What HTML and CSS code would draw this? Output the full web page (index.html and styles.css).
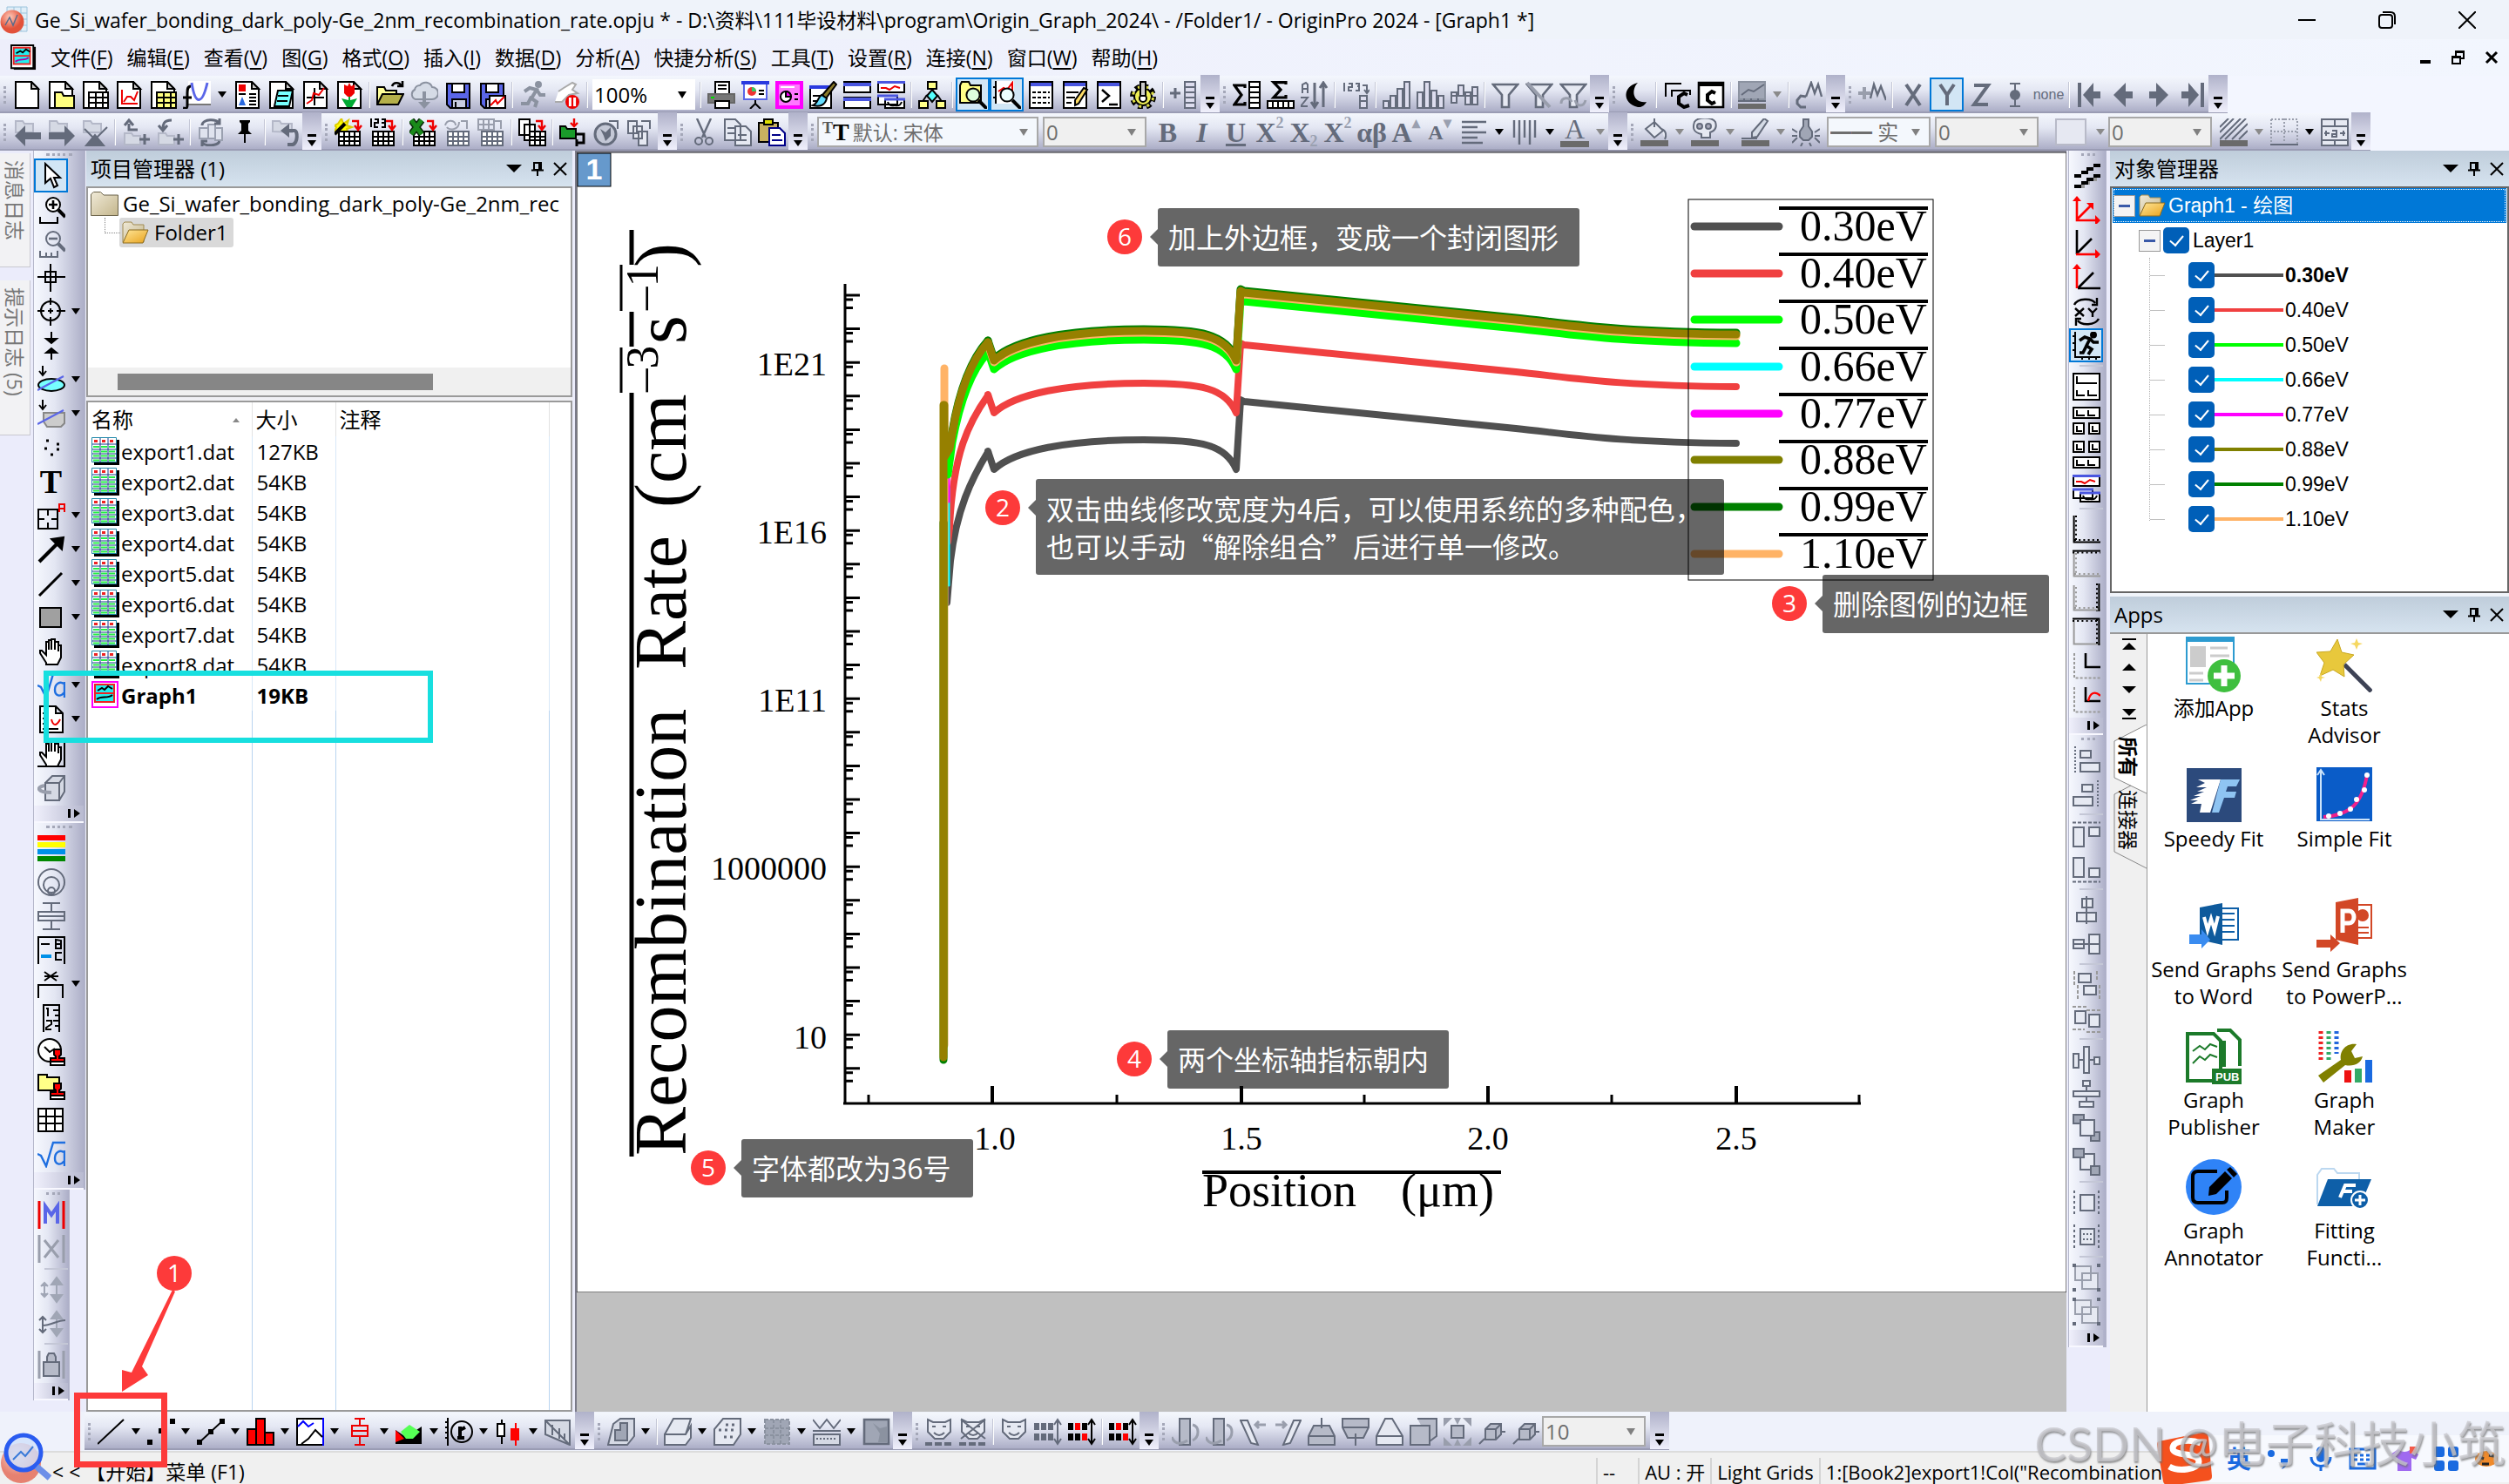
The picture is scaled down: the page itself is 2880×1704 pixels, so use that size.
FILE: index.html
```html
<!DOCTYPE html>
<html lang="zh-CN">
<head>
<meta charset="utf-8">
<title>OriginPro 2024 - [Graph1 *]</title>
<link rel="stylesheet" href="styles.css">
</head>
<body>
<svg class="sprite" aria-hidden="true">
<defs>
<linearGradient id="gold" x1="0" y1="0" x2="1" y2="1"><stop offset="0" stop-color="#ffe79a"/><stop offset="1" stop-color="#e8a21c"/></linearGradient>
<linearGradient id="tan" x1="0" y1="0" x2="1" y2="1"><stop offset="0" stop-color="#f0ead8"/><stop offset="1" stop-color="#c4b68c"/></linearGradient>
<radialGradient id="ball" cx=".4" cy=".3"><stop offset="0" stop-color="#ffc9b8"/><stop offset="1" stop-color="#e2523a"/></radialGradient>
</defs>
<symbol id="doc" viewBox="0 0 16 16"><path fill="#fff" d="M1.5.5h9l4 4v11h-13z"/><path fill="#ccc" d="M10.5.5v4h4z"/></symbol>
<symbol id="docfold" viewBox="0 0 16 16"><use href="#doc"/><path fill="#ffff80" d="M4.500 15.500v-9h4l1 2h6v7z"/></symbol>
<symbol id="doctable" viewBox="0 0 16 16"><use href="#doc"/><path fill="#fff" d="M4.500 6.500h11v9h-11zM4.500 9.500h11M4.500 12.500h11M8.500 6.500v9M12.500 6.500v9"/></symbol>
<symbol id="docyel" viewBox="0 0 16 16"><use href="#doc"/><path fill="#ffff80" d="M4.500 6.500h11v9h-11zM4.500 9.500h11M4.500 12.500h11M8.500 6.500v9M12.500 6.500v9"/></symbol>
<symbol id="docgraph" viewBox="0 0 16 16"><use href="#doc"/><path stroke="#e00" d="M4 5v8h9M5 12l2-3h2l2 2 2-5"/></symbol>
<symbol id="func" viewBox="0 0 16 16"><path fill="#fff" stroke="none" d="M3 0h13v13H3z"/><path stroke="#5a66e8" stroke-width="1.500" d="M5 1c2 13 6 13 9 0"/><path stroke="#777" d="M3 13.500h13"/><path stroke-width="1.500" d="M4.500 3c-2 0-2 2-2 4v7c0 2-1 2-2.500 1.500M0 9.500h5"/></symbol>
<symbol id="docnote" viewBox="0 0 16 16"><use href="#doc"/><path fill="#e00" stroke="none" d="M3 2h4v4H3z"/><path d="M3 7.500h4M9 7.500h4M9 9.500h4M9 11.500h4M9 13.500h4"/><path fill="#2a6ae0" stroke="none" d="M3 14l2-5 2 5z"/></symbol>
<symbol id="docdata" viewBox="0 0 16 16"><use href="#doc"/><path fill="#7ff" d="M4 14.500l2-9h8.500l-2 9zM6 8.500h6M5.500 11.500h6"/></symbol>
<symbol id="docaxis" viewBox="0 0 16 16"><use href="#doc"/><path d="M7.500 4v10M3 9.500h10"/><path stroke="#e00" d="M3 13l3-2 1-4 3 1 3-4"/></symbol>
<symbol id="doctulip" viewBox="0 0 16 16"><use href="#doc"/><path fill="#e00" stroke="none" d="M5 2l2 1 1-2 1 2 2-1v5l-2 2H7L5 7z"/><path fill="#0a3" stroke="none" d="M7.500 9h1v2l4-1-3 5h-3l-3-5 4 1z"/></symbol>
<symbol id="open" viewBox="0 0 16 16"><path fill="#ffff9a" d="M.5 13.500v-10h4l1 2h6v3"/><path fill="#b5b04a" d="M.5 13.500l3-6h12l-3 6z"/><path stroke-width="1.300" d="M9 3c1-3 5-2 5 0M12 3h3V0"/></symbol>
<symbol id="cloud" viewBox="0 0 16 16"><path fill="#d5dbe6" stroke="#8b92a0" d="M3 10.500a3 3 0 01-.5-5.500 3 3 0 013-2.500 4 4 0 017 1 3.500 3.500 0 010 7z"/><path stroke="#8b92a0" stroke-width="2" d="M8 6v8"/><path fill="#8b92a0" stroke="none" d="M4.500 12h7L8 16z"/></symbol>
<symbol id="save" viewBox="0 0 16 16"><path fill="#5a66e8" d="M1.500 1.500h13v14h-11l-2-2z"/><path fill="#fff" d="M4.500 1.500h7v5h-7z"/><path fill="#c8cce0" d="M4.500 10.500h8v5h-8zM6.500 12v3"/></symbol>
<symbol id="savegraph" viewBox="0 0 16 16"><use href="#save"/><path fill="#fff" d="M6.500 8.500h9v7h-9z"/><path stroke="#e00" d="M7 14l3-3 1 2 4-4"/></symbol>
<symbol id="run" viewBox="0 0 16 16"><g stroke="#8b92a0"><circle cx="11" cy="2" r="1.500" fill="#8b92a0"/><path stroke-width="2" d="M3 6l3-2 4 1-3 5 3 2-1 3M7 9l-2 4H1M10 5l2 3h3"/></g></symbol>
<symbol id="stop" viewBox="0 0 16 16"><path fill="#fff" stroke="#aaa" d="M3 6l3-2 5-3 2 1-2 3 3 2-5 1-4 4H1"/><circle cx="11" cy="12" r="4" fill="#e00" stroke="none"/><path stroke="#fff" stroke-width="1.500" d="M9.700 9.500v5M12.300 9.500v5"/></symbol>
<symbol id="print" viewBox="0 0 16 16"><path fill="#fff" d="M4.500.5h8v7h-8zM6 2.500h5M6 4.500h5"/><path fill="#777" stroke="#666" d="M.5 7.500h15v5H.5z"/><path fill="#fff" d="M4.500 11.500h8v4h-8z"/><path stroke="#0d0" d="M2 9.500h2"/></symbol>
<symbol id="slide" viewBox="0 0 16 16"><path fill="#fff" stroke="#5a66e8" d="M1.500 1.500h13v9h-13z"/><path stroke="#2a3adf" stroke-width="2" d="M0 1h16"/><path d="M8 11v2M5 16l3-3 3 3"/><circle cx="6" cy="6" r="2.500" fill="#e33" stroke="none"/><path fill="#3c6" stroke="none" d="M6 6V3.500A2.500 2.500 0 018.500 6z"/><path d="M10 5.500h3M10 7.500h3"/></symbol>
<symbol id="magenta" viewBox="0 0 16 16"><path fill="#f7f" stroke="#f0f" stroke-width="2" d="M1 1h14v14H1z"/><path fill="#fff" stroke="none" d="M3 3h8v1H3z"/><circle cx="6" cy="9" r="3" stroke="#000" fill="#fff"/><path fill="#f0f" d="M6 9V6a3 3 0 013 3zM11 7.500h2M11 10.500h2"/></symbol>
<symbol id="brush" viewBox="0 0 16 16"><path fill="#fff" d="M.5 3.500h12v12H.5z"/><path stroke="#2a3adf" stroke-width="2" d="M0 3.500h12"/><path d="M2 8.500h8M2 11.500h5"/><path fill="#8a7a2a" d="M14 .5l1.500 1.500-6 8-2-2z"/><path fill="#6df" d="M7 8l3 2c-1 4-4 5-8 4 3-1 3-5 5-6z"/></symbol>
<symbol id="win" viewBox="0 0 16 16"><path fill="#fff" d="M.5.5h15v6H.5zM.5 9.500h15v6H.5z"/><path stroke="#4a56e0" stroke-width="2" d="M0 2h16M0 10.500h16"/></symbol>
<symbol id="wins" viewBox="0 0 16 16"><path fill="#fff" d="M.5.5h15v6H.5zM.5 8.500h11v5H.5zM4.500 10.500h11v5h-11z"/><path stroke="#4a56e0" stroke-width="1.500" d="M0 .7h16M0 8.500h12M4 10.500h12"/><path stroke="#e00" d="M2 4h3l2 1 3-2 3 1"/><path d="M6 12c1 3 3 2 4 2s3 1 4-2"/></symbol>
<symbol id="tree" viewBox="0 0 16 16"><path d="M8 4v8M3 13v-2l2-3M13 13v-2l-2-3"/><path fill="#ff8" d="M5.500.5h5v4h-5zM.5 11.500h5v4h-5zM10.500 11.500h5v4h-5z"/><path fill="#5ff" d="M8 5l3 3.500L8 12 5 8.500z"/></symbol>
<symbol id="magfold" viewBox="0 0 16 16"><path fill="#ff8" d="M.5 12.500V2.500l1-2h4l1 2h6v10z"/><path stroke-width="2" d="M11 11l5 5"/><circle cx="8" cy="8" r="3.800" fill="#dfd"/></symbol>
<symbol id="maggraph" viewBox="0 0 16 16"><path fill="#fff" stroke="none" d="M2 0h10v13H2z"/><path stroke="#e00" d="M3 6l3-2 2 1 3-4v6"/><path d="M1.500 0v13M0 3.500h2M0 9.500h2"/><path stroke-width="2" d="M11 11l5 5"/><circle cx="8" cy="8" r="3.800" fill="#eff"/></symbol>
<symbol id="calc" viewBox="0 0 16 16"><path fill="#fff" d="M1.500.5h13v15h-13z"/><path stroke="#4a56e0" stroke-width="2" d="M2 2h12"/><path stroke-dasharray="2 1" d="M3 6.500h10M3 9.500h10M3 12.500h10"/></symbol>
<symbol id="notes" viewBox="0 0 16 16"><path fill="#fff" d="M1.500.5h13v15h-13z"/><path stroke="#4a56e0" stroke-width="2" d="M2 2h12"/><path d="M3 6.500h7M3 9.500h5M3 12.500h3"/><path fill="#fd6" d="M13 4l2 1-5 8-2 1 0-3z"/></symbol>
<symbol id="cmd" viewBox="0 0 16 16"><path fill="#fff" d="M1.500.5h13v15h-13z"/><path stroke="#4a56e0" stroke-width="2" d="M2 2h12"/><path stroke-width="1.300" d="M4 5l4 3.500L4 12M8 13.500h5"/></symbol>
<symbol id="gear" viewBox="0 0 16 16"><circle cx="8" cy="9" r="6" stroke="#000" stroke-width="3" stroke-dasharray="2.700 2"/><circle cx="8" cy="9" r="5" fill="#ee5" /><circle cx="8" cy="9" r="5.800" stroke="#dd4" stroke-width="1.500" stroke-dasharray="1.500 3.200" stroke-dashoffset="-.6"/><circle cx="8" cy="10" r="2" fill="#fff"/><path fill="#ccc" d="M6.500.5h3v8h-3z"/></symbol>
<symbol id="addcol" viewBox="0 0 16 16"><path stroke-width="1.500" d="M0 7h6M3 4v6"/><path fill="#dde" d="M8.500.5h6v15h-6zM8.500 3.500h6M8.500 6.500h6M8.500 9.500h6M8.500 12.500h6"/></symbol>
<symbol id="sumcol" viewBox="0 0 16 16"><path stroke-width="1.600" d="M7 4V2.500H1L5 8l-4 5.500h6V12"/><path fill="#fff" d="M9.500.5h6v15h-6zM9.500 3.500h6M9.500 6.500h6M9.500 9.500h6M9.500 12.500h6"/></symbol>
<symbol id="sumrow" viewBox="0 0 16 16"><path stroke-width="1.600" d="M11 2V.8H4L8 5l-4 4.500h7V8"/><path fill="#fff" d="M.5 11.500h15v4H.5zM3.500 11v5M6.500 11v5M9.500 11v5M12.500 11v5"/></symbol>
<symbol id="sort" viewBox="0 0 16 16"><path d="M1 7V2l2-1 1 1v5M1 4.500h3M0 9.500h4l-4 5h4"/><path stroke-width="1.500" d="M8 1v14M13 1v14M6 12l2 3 2-3M11 4l2-3 2 3"/></symbol>
<symbol id="n123" viewBox="0 0 16 16"><path d="M1.500 1v5M4 1.500h2v2H4v2h2M8 1.500h2V3H9M10 3v2.500H8M12 2.500h2.500V6M13 5l1.500 2L16 5"/><path fill="#dde" d="M10.500 8.500h4v7h-4zM10.500 11.500h4"/></symbol>
<symbol id="bars" viewBox="0 0 16 16"><path fill="#dde" d="M.5 11.500h3v4h-3zM4.500 8.500h3v7h-3zM8.500 4.500h3v11h-3zM12.500.5h3v15h-3z"/></symbol>
<symbol id="bars2" viewBox="0 0 16 16"><path fill="#dde" d="M.5 6.500h3v9h-3zM4.500.5h3v15h-3zM8.500 5.500h3v10h-3zM12.500 8.500h3v7h-3z"/></symbol>
<symbol id="bars3" viewBox="0 0 16 16"><path fill="#dde" d="M.5 6.500h3v6h-3zM4.500 2.500h3v6h-3zM8.500 6.500h3v7h-3zM12.500 3.500h3v10h-3zM0 8.500h16"/></symbol>
<symbol id="filter" viewBox="0 0 16 16"><path fill="#e6e9f2" stroke-width="1.300" d="M1 2h14l-5 6v7H6V8z"/></symbol>
<symbol id="filterx" viewBox="0 0 16 16"><use href="#filter"/><path stroke="#999eac" stroke-width="2" d="M1 1l13 14"/></symbol>
<symbol id="filterr" viewBox="0 0 16 16"><use href="#filter"/><path stroke="#999eac" stroke-width="1.500" d="M1 13c0-4 5-4 6-1M9 11c1 4 5 4 6 0"/></symbol>
<symbol id="moon" viewBox="0 0 16 16"><path fill="#000" stroke="none" d="M9 1C0 3 0 13 9 15c2 .3 4-1 5-3C6 13 5 5 9 1z"/></symbol>
<symbol id="cc" viewBox="0 0 16 16"><path d="M1.500 9V1.500h9M5 9V5.500h10.500V8"/><path stroke-width="2" d="M14 8l-2-1-3 2v4l3 2 3-1"/></symbol>
<symbol id="cwin" viewBox="0 0 16 16"><path fill="#fff" stroke-width="1.300" d="M1 1h14v14H1z"/><path stroke-width="2" d="M1 2h14M10.500 7L8.500 6 6 8v3l2.500 2 2-1"/></symbol>
<symbol id="theme" viewBox="0 0 16 16"><path fill="#a0a6b5" stroke="#8b92a0" d="M.5.5h15v10H.5z"/><path d="M2 8l4-3 3 1 6-4M0 11.500h16M3.500 10v2M7.500 10v2M11.500 10v2"/><path fill="#6a6a6a" stroke="none" d="M0 13h16v3H0z"/></symbol>
<symbol id="cm" viewBox="0 0 16 16"><path stroke-width="1.500" d="M6 9L3 8.500 1 11v2l2 2h3"/><path stroke-width="1.200" d="M6 9l3-8 2 6 2-5 2 7"/></symbol>
<symbol id="plusm" viewBox="0 0 16 16"><path stroke="#999eac" stroke-width="2" d="M0 7h7M3.500 3.500v7"/><path stroke-width="1.200" d="M7 10l2-8 2 6 2-5 3 8"/></symbol>
<symbol id="X" viewBox="0 0 16 16"><path stroke-width="2" d="M4 2l8 12M12 2L4 14"/></symbol>
<symbol id="Y" viewBox="0 0 16 16"><path stroke-width="2" d="M4 2l4 6v6M12 2L8 8"/></symbol>
<symbol id="Z" viewBox="0 0 16 16"><path stroke-width="2" d="M4 2.500h8l-8 11h8"/></symbol>
<symbol id="ibar" viewBox="0 0 16 16"><circle cx="8" cy="8" r="2.500" fill="currentColor"/><path d="M5 1.500h6M8 1v14M5 14.500h6"/></symbol>
<symbol id="first" viewBox="0 0 16 16"><path fill="currentColor" stroke="none" d="M1 1h2v14H1zM4 8l6-7v5h4v4h-4v5z"/></symbol>
<symbol id="prev" viewBox="0 0 16 16"><path fill="currentColor" stroke="none" d="M2 8l7-7v5h4v4H9v5z"/></symbol>
<symbol id="next" viewBox="0 0 16 16"><path fill="currentColor" stroke="none" d="M14 8L7 1v5H3v4h4v5z"/></symbol>
<symbol id="last" viewBox="0 0 16 16"><path fill="currentColor" stroke="none" d="M15 1h-2v14h2zM12 8L6 1v5H2v4h4v5z"/></symbol>
<symbol id="fback" viewBox="0 0 16 16"><path fill="#d5d9e4" stroke="#b4b8c8" d="M1.500 8V1.500h4l1 1.500h5v5z"/><path fill="currentColor" stroke="none" d="M1 10l6-6v4h9v4H7v4z"/></symbol>
<symbol id="ffwd" viewBox="0 0 16 16"><path fill="#d5d9e4" stroke="#b4b8c8" d="M1.500 8V1.500h4l1 1.500h5v5z"/><path fill="currentColor" stroke="none" d="M16 10l-6-6v4H1v4h9v4z"/></symbol>
<symbol id="fup" viewBox="0 0 16 16"><path fill="#d5d9e4" stroke="#b4b8c8" d="M1.500 8V1.500h4l1 1.500h5v5z"/><path fill="currentColor" d="M3 15.500l5-6 5 6zM2 6l5 5M9 11l6-6"/></symbol>
<symbol id="fnew" viewBox="0 0 16 16"><path fill="#d5d9e4" stroke="#b4b8c8" d="M1.500 15V8.500h4l1 1.500h4v5z"/><path stroke-width="1.500" d="M4 3v3.500h5M1.500 4L4 1l2.500 3M10 12h6M13 9v6"/></symbol>
<symbol id="fnew2" viewBox="0 0 16 16"><path fill="#d5d9e4" stroke="#b4b8c8" d="M1.500 15V8.500h4l1 1.500h4v5z"/><path stroke-width="1.500" d="M9 1C4 1 4 4 4 6M1.500 4L4 7l2.500-3M10 12h6M13 9v6"/></symbol>
<symbol id="refresh" viewBox="0 0 16 16"><path fill="#dfe3ee" stroke="#9aa0b0" d="M1.500 5.500h5v6h-5zM6.500 3.500h4v8h-4zM10.500 5.500h4v7h-4z"/><path stroke-width="1.500" d="M3 4c0-4 9-4 10-1M13 0v3h-3M13 13c-1 3-8 3-10 1M3 16v-3h3"/></symbol>
<symbol id="pin" viewBox="0 0 16 16"><path fill="#000" stroke="none" d="M5 1h6v1l-1 1v4l2 2H8.500v5h-1V9H4l2-2V3L5 2z"/></symbol>
<symbol id="undo" viewBox="0 0 16 16"><path fill="#d5d9e4" stroke="#b4b8c8" d="M.5 7.500V1.500h4l1 1.500h6v5z"/><path stroke-width="2" d="M8 7h5c2 0 2 7-1 8H9"/><path fill="currentColor" stroke="none" d="M5 7l5-4v8z"/></symbol>
<symbol id="impwiz" viewBox="0 0 16 16"><path fill="#ff0" stroke="#dc0" d="M4 0l1 3 3-2-1 3 3 1-3 1 1 3-3-1-2 3-1-3-2 0 1-3-1-1 2-1z"/><path stroke-width="2" d="M0 9l6-6"/><use href="#grid"/><use href="#redarr"/></symbol>
<symbol id="grid" viewBox="0 0 16 16"><path fill="#fff" d="M2.500 7.500h12v8h-12zM2.500 10.500h12M2.500 13h12M5.500 8v8M8.500 8v8M11.500 8v8"/></symbol>
<symbol id="redarr" viewBox="0 0 16 16"><path stroke="#e00" stroke-width="1.200" d="M10 1.500h3.500V6M11.500 4l2 2.500 2-2.500"/></symbol>
<symbol id="imp123" viewBox="0 0 16 16"><path d="M1.500 0v5M3.500.5h2v2h-2v2.500h2M7.500.5h2v4.500h-2M7.500 2.500h2"/><use href="#grid"/><use href="#redarr"/></symbol>
<symbol id="impxl" viewBox="0 0 16 16"><use href="#grid"/><path stroke="#0a2a0a" stroke-width="4" d="M1 1l6 8M7 1L1 9"/><path stroke="#1a8a1a" stroke-width="2.500" d="M1 1l6 8M7 1L1 9"/><use href="#redarr"/></symbol>
<symbol id="reimp" viewBox="0 0 16 16"><path stroke="#999eac" d="M1 4c1-4 6-3 6 0M9 2c0 5-6 5-7 3M10 1.500h3.500V6"/><use href="#grid"/></symbol>
<symbol id="reimp2" viewBox="0 0 16 16"><path stroke="#999eac" d="M.5.5h9v6h-9zM.5 3.500h9M3.500.5v6M6.500.5v6M10 1.500h3.500V6"/><use href="#grid"/></symbol>
<symbol id="books" viewBox="0 0 16 16"><path fill="#fff" d="M.5.500h6v9h-6zM3.500 3.500h6v9h-6zM6.500 7.500h9v8h-9zM6.500 10.500h9M6.500 12.500h9M9.500 8v7M12.500 8v7"/><use href="#redarr"/></symbol>
<symbol id="greenf" viewBox="0 0 16 16"><path fill="#1a9a2a" d="M.5 11.500v-7h3l1 1.500h5v5.500z"/><path stroke="#e00" stroke-width="1.200" d="M8.500 0v4M6.500 2.500l2 2 2-2"/><path stroke-width="1.500" d="M9 9h5v5h-4M10 12v4"/></symbol>
<symbol id="globe" viewBox="0 0 16 16"><circle cx="7" cy="9" r="6" fill="#c4c8d6" stroke-width="1.500"/><path fill="currentColor" stroke="none" d="M4 6l3 2 3-3v5l-3 3-1-3z"/><path d="M9 1.500h5V6"/></symbol>
<symbol id="papers" viewBox="0 0 16 16"><path fill="#e6e9f2" d="M.5 1.500h5v7h-5zM3.500 4.500h5v7h-5zM6.500 7.500h5v8h-5z"/><path d="M8 1.500h5V6"/></symbol>
<symbol id="cut" viewBox="0 0 16 16"><path stroke-width="1.200" d="M4 0l5 11M12 0L7 11"/><circle cx="5" cy="13" r="2"/><circle cx="11" cy="13" r="2"/></symbol>
<symbol id="copy" viewBox="0 0 16 16"><path fill="#e6e9f2" d="M.5.500h6l3 3v9h-9zM6.500 4.500h6l3 3v8h-9z"/><path d="M2 5.500h4M2 8.500h4M8 9.500h5M8 12.500h5"/></symbol>
<symbol id="paste" viewBox="0 0 16 16"><path fill="#c8b060" d="M.5 2.500h11v11H.5z"/><path fill="#dd0" d="M3.500.5h5v3h-5z"/><path fill="#fff" stroke="#008" d="M6.500 5.500h6l3 3v7h-9z"/><path stroke="#008" d="M8 9.500h5M8 12.500h6"/></symbol>
<symbol id="align" viewBox="0 0 16 16"><path stroke-width="1.200" d="M1 2h14M1 5h9M1 8h14M1 11h9M1 14h12"/></symbol>
<symbol id="vlines" viewBox="0 0 16 16"><path stroke-width="1.200" d="M2 1v10M5 1v14M8 1v10M11 1v14M14 1v10"/></symbol>
<symbol id="under" viewBox="0 0 16 16"><path fill="#6a6a6a" stroke="none" d="M0 12.500h16v3.500H0z"/></symbol>
<symbol id="bucket" viewBox="0 0 16 16"><use href="#under"/><path fill="#e6e9f2" d="M3 6l5-4 5 5-5 4zM8 5V0M12 6c3 1 3 4 2 6"/></symbol>
<symbol id="skull" viewBox="0 0 16 16"><use href="#under"/><path fill="#e6e9f2" d="M2 2c2-3 10-3 12 0 1 3 0 5-3 6v3H6V9C1 8 1 5 2 2z"/><circle cx="5" cy="4.500" r="1.500" fill="#aab"/><circle cx="10" cy="4.500" r="1.500" fill="#aab"/></symbol>
<symbol id="pencil" viewBox="0 0 16 16"><use href="#under"/><path fill="#d5dbe6" d="M13 0l2 1.500-6 9-3 .5v-3zM0 11.500h9"/></symbol>
<symbol id="bulb" viewBox="0 0 16 16"><path fill="#a0a6b5" d="M6.500.500h3v4l2 3v3l-2 2h-3l-2-2v-3l2-3z"/><path d="M0 6l3 2M16 6l-3 2M0 14l3-3M16 14l-3-3M5 16l1-2M11 16l-1-2M0 10h3M13 10h3"/></symbol>
<symbol id="hatch" viewBox="0 0 16 16"><use href="#under"/><path d="M0 5l5-5M0 8l8-8M0 12L12 0M3 12L15 0M7 12l9-9M11 12l5-5"/></symbol>
<symbol id="borders" viewBox="0 0 16 16"><path stroke="#999eac" stroke-dasharray="1 1" d="M.5.500h15v14M.5.500v14M8 0v14M0 7.500h16"/><path d="M0 15h16"/></symbol>
<symbol id="merge" viewBox="0 0 16 16"><path fill="#e6e9f2" d="M.5.500h15v15H.5zM.5 4.500h15M.5 12.500h15M8 0v4M8 12v4M6.500 7h2.500v3.500H6.500V9H9M2 8.500h3M11 8.500h3M3 7v3M13 7v3"/></symbol>
<symbol id="ptr" viewBox="0 0 16 16"><path fill="#fff" d="M4.500 1v11l3-2.500 2 5 2-1-2-4.500h3.500z"/></symbol>
<symbol id="zin" viewBox="0 0 16 16"><circle cx="9" cy="5" r="4" fill="#fff"/><path stroke-width="1.300" d="M6.500 5h5M9 2.500v5"/><path stroke-width="2" d="M12 8l4 4"/><path d="M1.500 12v3.500h10V12"/></symbol>
<symbol id="zout" viewBox="0 0 16 16"><circle cx="9" cy="5" r="4"/><path stroke-width="1.300" d="M6.500 5h5"/><path stroke-width="2" d="M12 8l4 4"/><path d="M1.500 12v3.500h10V12M5 13v2M8 13v2"/></symbol>
<symbol id="cross" viewBox="0 0 16 16"><path d="M0 7.500h16M7.500 0v16M4.500 4.500h6v6h-6z"/></symbol>
<symbol id="target" viewBox="0 0 16 16"><circle cx="7.500" cy="7.500" r="5.500"/><path d="M0 7.500h4M11 7.500h5M7.500 0v4M7.500 11v5M6 7.500h3M7.500 6v3"/></symbol>
<symbol id="squeeze" viewBox="0 0 16 16"><path fill="#000" d="M8 0v4M5 4h6L8 6.500zM8 16v-4M5 12h6L8 9.500z"/></symbol>
<symbol id="ell" viewBox="0 0 16 16"><ellipse cx="8" cy="11" rx="7.500" ry="3.500" fill="#7ff"/><path stroke="#5a66e8" d="M0 14L15 6"/><path d="M3 0v5M1 3l2 2.500L5 3"/></symbol>
<symbol id="ellg" viewBox="0 0 16 16"><path fill="#ccc" stroke="#888" d="M3.500 7.500h12v6l-2 2h-8l-2-3z"/><path stroke="#5a66e8" d="M0 14L15 6"/><path d="M3 0v5M1 3l2 2.500L5 3"/></symbol>
<symbol id="dots" viewBox="0 0 16 16"><path stroke-width="1.500" d="M5 4h1.500M11 6h1.500M4 8.500h1.500M11 9h1.500M7.500 12h1.500"/></symbol>
<symbol id="layer" viewBox="0 0 16 16"><path d="M.5 4.500h11v11H.5zM6 5v3M6 12v3M1 10h3M8 10h3"/><path stroke="#e00" d="M12.500 6V1.500h3V6M12 4h4"/></symbol>
<symbol id="arr" viewBox="0 0 16 16"><path stroke-width="2" d="M1 15L12 4"/><path fill="#000" d="M8 2l7-1-1 7z"/></symbol>
<symbol id="line" viewBox="0 0 16 16"><path stroke-width="1.500" d="M1 15L14 2"/></symbol>
<symbol id="rect" viewBox="0 0 16 16"><path fill="#a0a0a0" d="M1.500 2.500h12v11h-12z"/></symbol>
<symbol id="hand" viewBox="0 0 16 16"><path fill="#fff" d="M5 14.500L1.500 9V7.500h1L5 10V2.500h1.500V7 1.500H8V7 1h2v6-4.500h2V8 4.500h1.500v7l-2 4H5z"/></symbol>
<symbol id="sqrt" viewBox="0 0 16 16"><path stroke="#1f6fe0" stroke-width="1.200" d="M0 8l2 1 3 6L9 1.500h7M15.500 6v9M15 7c-2-1.500-5 0-5 3.500S13 15 15.500 12"/></symbol>
<symbol id="docins" viewBox="0 0 16 16"><path fill="#fff" d="M1.500.5h9l4 4v11h-13zM10.500.5v4h4M3 4.500h3M3 7.500h3M3 10.500h3M3 13.500h9"/><path stroke="#e00" d="M8 8c1 4 3 4 5 0"/></symbol>
<symbol id="handax" viewBox="0 0 16 16"><use href="#hand"/><path d="M0 15.500h16M15.500 2v13"/></symbol>
<symbol id="cube" viewBox="0 0 16 16"><path fill="#d5d9e4" d="M4.500 5.500h8v10h-8zM4.500 5.500l4-4h7v9l-3 5M12.500 5.500l3-4"/><path stroke="#999eac" stroke-width="2" d="M4 7C-1 8 0 11 8 11"/></symbol>
<symbol id="stripes" viewBox="0 0 16 16"><g stroke-width="3"><path stroke="#f00" d="M0 2h16"/><path stroke="#ff0" d="M0 6h16"/><path stroke="#0090e8" d="M0 10h16"/><path stroke="#080" d="M0 14h16"/></g></symbol>
<symbol id="rings" viewBox="0 0 16 16"><circle cx="8" cy="8" r="7.500"/><circle cx="8" cy="9.500" r="4.500"/><circle cx="8" cy="13" r="2"/></symbol>
<symbol id="box" viewBox="0 0 16 16"><path d="M3 .5h10M8 0v5M.5 5.500h15v5H.5zM.5 8h15M8 11v4M3 15.500h10"/></symbol>
<symbol id="legend" viewBox="0 0 16 16"><path d="M.5 16V.500h15V16M2 4.500h5M10.500 2v5h3V2.500zM10.500 4.500h3M14 9.500h-3.500v4H14"/><path stroke="#0090e8" stroke-width="2" d="M2 11.500h6"/></symbol>
<symbol id="newx" viewBox="0 0 16 16"><path d="M4 1l7 5M11 1L4 6M4 3.500h8M.5 16V8.500h14V16"/></symbol>
<symbol id="ruler" viewBox="0 0 16 16"><path fill="#fff" d="M3.500 0v16M12.500 0v16M3 .500h10M9 3.500h3M10 6.500h2M9 9.500h3M10 12.500h2M5 2.500h1V7M5 9.500h3v2l-3 2v1h3"/></symbol>
<symbol id="clock" viewBox="0 0 16 16"><circle cx="7" cy="7" r="6.500" fill="#fff"/><path d="M4 5l3 3 3-2"/><use href="#stamp"/></symbol>
<symbol id="stamp" viewBox="0 0 16 16"><path fill="#f00" d="M9.500 6.500h4v3l-1 1v1h3v2h-8v-2h3v-1l-1-1z"/><path fill="#fff" d="M7.500 13.500h8v2h-8z"/></symbol>
<symbol id="foldst" viewBox="0 0 16 16"><path fill="#ff8" d="M.5 10.500V1.500h5v1.500h7v7.500z"/><use href="#stamp"/></symbol>
<symbol id="table" viewBox="0 0 16 16"><path fill="#fff" d="M.5 1.500h14v13H.5zM.5 6h14M.5 10h14M5 2v12M10 2v12"/></symbol>
<symbol id="barM" viewBox="0 0 16 16"><path stroke="#e00" stroke-width="1.500" d="M1 0v16M15 0v16"/><path stroke="#5a66e8" stroke-width="2" d="M4.500 13V3L8 8l3.500-5v10"/></symbol>
<symbol id="barX" viewBox="0 0 16 16"><path stroke="#999eac" stroke-width="1.500" d="M1 0v16M15 0v16M4 3l8 10M12 3L4 13"/></symbol>
<symbol id="updn" viewBox="0 0 16 16"><path fill="#a0a6b5" stroke="#a0a6b5" d="M4 4v8M2 6l2-2 2 2M2 10l2 2 2-2M11 2v12M8 5l3-4 3 4zM8 11l3 4 3-4z"/></symbol>
<symbol id="updn2" viewBox="0 0 16 16"><path fill="#a0a6b5" stroke="#a0a6b5" d="M11 2v12M8 5l3-4 3 4zM8 11l3 4 3-4z"/><path d="M3 4v9M1 6l2-2 2 2M1 11l2 2 2-2M3 9c5 0 8-3 13-3"/></symbol>
<symbol id="lock" viewBox="0 0 16 16"><path stroke="#999eac" stroke-width="1.500" d="M1 0v16M15 0v16"/><path fill="#b6bac8" d="M3.500 6.500h9v8h-9zM5.500 6V3.500l1-2h3l1 2V6"/></symbol>
<symbol id="steps" viewBox="0 0 16 16"><path stroke-width="2" d="M1 8h4M5 6h4M8 4h4M12 2h4"/><path stroke="#999" stroke-width="2" d="M3 14h4M6 12h4M9 10h5"/><path stroke-width="2" d="M1 14h4M5 12h4M8 10h4M12 8h4"/></symbol>
<symbol id="ax1" viewBox="0 0 16 16"><path stroke="#f00" stroke-width="1.300" d="M2.500 3v11H14M3 13l8-8"/><path fill="#f00" stroke="none" d="M0 3l2.500-3L5 3zM13 11l3 3-3 3zM8 4h4v4z"/></symbol>
<symbol id="ax2" viewBox="0 0 16 16"><path stroke-width="1.300" d="M2.500 0v14M3 13l8-8"/><path stroke="#f00" stroke-width="1.300" d="M2 14h12"/><path fill="#f00" stroke="none" d="M13 11l3 3-3 3z"/></symbol>
<symbol id="ax3" viewBox="0 0 16 16"><path stroke-width="1.300" d="M3 14l9-9M3 14h13"/><path stroke="#f00" stroke-width="1.300" d="M2.500 2v12"/><path fill="#f00" stroke="none" d="M0 3l2.500-3L5 3z"/></symbol>
<symbol id="xy" viewBox="0 0 16 16"><path stroke-width="1.200" d="M1 4c2-4 10-4 12-1M14 0v4h-3M15 12c-2 4-10 4-12 1M2 16v-4h3M1.500 6l5 4.500M6.500 6l-5 4.500M9 6l2.500 2.500L14 6M11.500 8v3"/></symbol>
<symbol id="runax" viewBox="0 0 16 16"><path d="M1.500 0v14.500H16M0 2.500h2M0 6.500h2M0 10.500h2M5.500 14v2M9.500 14v2M13.500 14v2"/><circle cx="12" cy="1.800" r="1.500" fill="#000"/><path stroke-width="1.800" d="M4 5l3-2 3 1-2 4 3 2-2 3M8 8l-2 4H4M10 4l2 2h3"/></symbol>
<symbol id="lay1" viewBox="0 0 16 16"><path fill="#fff" d="M.5.500h15v15H.5z"/><path d="M2.500 2v4H14M2.500 10v3H7M9 10v3h5"/></symbol>
<symbol id="lay2" viewBox="0 0 16 16"><path fill="#fff" d="M.5.500h15v6H.5zM.5 9.500h6v6h-6zM9.500 9.500h6v6h-6z"/><path d="M2.500 2v3H7M9 2v3h4M2.500 11v3h3M11.500 11v3h3"/></symbol>
<symbol id="lay3" viewBox="0 0 16 16"><path fill="#fff" d="M.5 9.500h15v6H.5zM.5.500h6v6h-6zM9.500.500h6v6h-6z"/><path d="M2.500 11v3H7M9 11v3h4M2.500 2v3h3M11.500 2v3h3"/></symbol>
<symbol id="fr1" viewBox="0 0 16 16"><path d="M.8 0v15.200H16"/><path stroke-dasharray="1 1.600" d="M2 0v15M1 14h15"/></symbol>
<symbol id="fr2" viewBox="0 0 16 16"><path stroke="#999" d="M.8 1v14.200H16"/><path stroke="#999" stroke-dasharray="1 1.600" d="M2 2v13M1 14h15"/><path d="M0 .8h16"/><path stroke-dasharray="1 1.600" d="M0 1.800h16"/></symbol>
<symbol id="fr3" viewBox="0 0 16 16"><path stroke="#999" d="M.8 1v14.200H16"/><path stroke="#999" stroke-dasharray="1 1.600" d="M2 2v13M1 14h15"/><path d="M15.200 0v16"/><path stroke-dasharray="1 1.600" d="M14 0v16"/></symbol>
<symbol id="fr4" viewBox="0 0 16 16"><path stroke="#999" d="M.8 1v14.200H16"/><path d="M0 .8h15.200V16"/><path stroke-dasharray="1 1.600" d="M0 2h15M14 1v14"/></symbol>
<symbol id="fr5" viewBox="0 0 16 16"><path stroke="#999" stroke-dasharray="1.500 1" d="M1 1v14.200H16"/><path stroke-width="1.300" d="M7.500 1v8H16"/></symbol>
<symbol id="fr6" viewBox="0 0 16 16"><use href="#fr5"/><path stroke="#f00" stroke-width="1.200" d="M9 9c1-5 4-6 7-3"/></symbol>
<symbol id="al1" viewBox="0 0 16 16"><path stroke-dasharray="1 1" d="M1.500 0v16"/><path fill="#e6e9f2" d="M4.500 2.500h6v4h-6zM4.500 9.500h11v5h-11z"/></symbol>
<symbol id="al2" viewBox="0 0 16 16"><path stroke-dasharray="1 1" d="M14.500 0v16"/><path fill="#e6e9f2" d="M5.500 2.500h6v4h-6zM.5 9.500h11v5H.5z"/></symbol>
<symbol id="al3" viewBox="0 0 16 16"><path stroke-dasharray="2 1" d="M0 .8h16"/><path fill="#e6e9f2" d="M.5 3.500h6v11h-6zM9.500 3.500h6v5h-6z"/></symbol>
<symbol id="al4" viewBox="0 0 16 16"><path stroke-dasharray="2 1" d="M0 15.200h16"/><path fill="#e6e9f2" d="M.5 1.500h6v11h-6zM9.500 7.500h6v5h-6z"/></symbol>
<symbol id="al5" viewBox="0 0 16 16"><path fill="#e6e9f2" d="M5.500 1.500h6v5h-6zM2.500 9.500h11v5h-11z"/><path d="M8 0v16"/></symbol>
<symbol id="al6" viewBox="0 0 16 16"><path fill="#e6e9f2" d="M.5 5.500h6v5h-6zM9.500 2.500h6v11h-6z"/><path d="M0 8h16"/></symbol>
<symbol id="al7" viewBox="0 0 16 16"><path stroke="#999" stroke-dasharray="2 1" d="M1 0v8M14 0v6M3 8v8M15.500 8v8"/><path fill="#e6e9f2" d="M3.500 1.500h7v5h-7zM6.500 8.500h7v5h-7z"/></symbol>
<symbol id="al8" viewBox="0 0 16 16"><path stroke="#999" stroke-dasharray="2 1" d="M0 1h8M0 14h7M8 3h8M8 15.500h8"/><path fill="#e6e9f2" d="M1.500 3.500h6v7h-6zM9.500 5.500h6v7h-6z"/></symbol>
<symbol id="al9" viewBox="0 0 16 16"><path d="M0 8h16"/><path fill="#e6e9f2" d="M.5 4.500h3v8h-3zM6.500.500h3v15h-3zM12.500 6.500h3v4h-3z"/></symbol>
<symbol id="al10" viewBox="0 0 16 16"><path d="M8 0v16"/><path fill="#e6e9f2" d="M6 .500h4v3H6zM.5 6.500h15v3H.5zM4 12.500h8v3H4z"/></symbol>
<symbol id="fb1" viewBox="0 0 16 16"><path fill="#a0a6b5" d="M.5.500h6v5h-6zM10.500 10.500h5v5h-5z"/><path fill="#e6e9f2" d="M4.500 3.500h8v9h-8z"/></symbol>
<symbol id="fb2" viewBox="0 0 16 16"><path fill="#e6e9f2" d="M4.500 3.500h8v9h-8z"/><path fill="#a0a6b5" d="M.5.500h6v5h-6zM10.500 10.500h5v5h-5z"/></symbol>
<symbol id="vib" viewBox="0 0 16 16"><path fill="#e6e9f2" d="M4.500 3.500h8v9h-8z"/><path stroke-dasharray="1.500 1.500" d="M1 1v14M15 1v14"/></symbol>
<symbol id="vib2" viewBox="0 0 16 16"><use href="#vib"/><path stroke-dasharray="1 1" d="M6 6.500h5M6 9.500h5"/></symbol>
<symbol id="grp" viewBox="0 0 16 16"><path fill="#e6e9f2" stroke="#999eac" d="M1.500 1.500h9v8h-9zM5.500 5.500h9v9h-9z"/><path stroke-width="2" stroke-dasharray="2 12" d="M0 1h16M0 15h16"/></symbol>
<symbol id="sline" viewBox="0 0 16 16"><path d="M0 15L15 1"/></symbol>
<symbol id="sdots" viewBox="0 0 16 16"><path stroke-width="3" d="M0 14h3M6.500 7.500h3M13 2h3"/></symbol>
<symbol id="slidot" viewBox="0 0 16 16"><path d="M1 14.500L15 1.500"/><path stroke-width="3" d="M0 14h3M6.500 8h3M13 2h3"/></symbol>
<symbol id="redbar" viewBox="0 0 16 16"><path fill="#f00" d="M.5 6.500h5v9h-5zM5.500.500h5v15h-5zM10.500 8.500h5v7h-5z"/></symbol>
<symbol id="multi" viewBox="0 0 16 16"><path fill="#fff" d="M.5.500h15v15H.5z"/><path stroke="#00f" d="M1 5l3-3 3 3 3-2M15.500 0v16"/><path d="M3 15l4-3 4-5 4 4"/></symbol>
<symbol id="rbox" viewBox="0 0 16 16"><path stroke="#e00" d="M5 .500h6M8 0v4M3.500 4.500h9v6h-9zM3.500 7.500h9M8 11v4M5 15.500h6"/></symbol>
<symbol id="area" viewBox="0 0 16 16"><path fill="#000" stroke="none" d="M0 15V7l6 4 9-6v10z"/><path fill="#f00" stroke="none" d="M0 7l5 5-5 2z"/><path fill="#5f5" stroke="none" d="M3 8l5-4 6 4-4 4H6z"/></symbol>
<symbol id="polar" viewBox="0 0 16 16"><path d="M1.500 0v16M0 2.500h1M0 5.500h1M0 8.500h1M0 11.500h1"/><circle cx="9.500" cy="8" r="6"/><path stroke-width="2" d="M8.500 5v6.500M8.500 7l3-1.500M7 11.500h4"/></symbol>
<symbol id="candle" viewBox="0 0 16 16"><path d="M4 1v14"/><path fill="#fff" d="M1.500 3.500h4v7h-4z"/><path fill="#f00" stroke="#f00" d="M12 3v13M9.500 6.500h4v6h-4z"/></symbol>
<symbol id="wall" viewBox="0 0 16 16"><path fill="#d5d9e4" d="M.5 1.500h14v14zM.5 1.500v8l14 6M4.500 4v6M8.500 6v6M11.500 9v4"/></symbol>
<symbol id="c3d" viewBox="0 0 16 16"><path fill="#d5d9e4" d="M.5 15.500l3-12 4-3h8v10l-4 5z"/><path fill="#a0a6b5" d="M4.500 13v-6h3V3h4v10z"/></symbol>
<symbol id="s3d" viewBox="0 0 16 16"><path fill="#e6e9f2" d="M.5 9.500l5-9h10l-3 9zM.5 9.500h12l3-5v7l-3 4H.5z"/></symbol>
<symbol id="d3d" viewBox="0 0 16 16"><path fill="#e6e9f2" d="M.5 15.500v-9l5-6h10v9l-4 6z"/><path stroke-width="1.500" stroke-dasharray="1.500 2" d="M3 7h9M6 11h6M7 4h6"/></symbol>
<symbol id="mesh" viewBox="0 0 16 16"><path fill="#a0a6b5" stroke="#8b92a0" stroke-dasharray="2 1" d="M1 1h14v14H1zM1 6h14M1 10h14M6 1v14M10 1v14"/></symbol>
<symbol id="contour" viewBox="0 0 16 16"><path d="M0 1l4 5 4-5 4 5 4-5M0 7.500h16"/><path fill="#d5d9e4" d="M.5 9.500h15v6H.5z"/><path stroke-dasharray="1 1" d="M2 12h12"/></symbol>
<symbol id="img" viewBox="0 0 16 16"><path fill="#a0a6b5" stroke-width="1.300" d="M1 1h14v14H1z"/><path fill="#8b92a0" stroke="none" d="M6 3l4 3 4-1v9H9l1-5z"/></symbol>
<symbol id="mask" viewBox="0 0 16 16"><path fill="#e6e9f2" d="M1.500 1l3 1.500h7l3-1.500v7l-4 4h-5l-4-4z"/><path d="M4 5h2M10 5h2M5 8.500c2 2 4 2 6 0"/></symbol>
<symbol id="mask1" viewBox="0 0 16 16"><use href="#mask"/><path stroke-width="2" stroke-dasharray="4 1.500" d="M0 15h16"/></symbol>
<symbol id="maskx" viewBox="0 0 16 16"><use href="#mask1"/><path d="M1 1l14 11M15 1L1 12"/></symbol>
<symbol id="blk" viewBox="0 0 16 16"><path stroke-width="4" stroke-dasharray="3 1" d="M0 5h11M0 11h11"/><path d="M13.500 1v14M11.500 4l2-3 2 3M11.500 12l2 3 2-3"/></symbol>
<symbol id="blkr" viewBox="0 0 16 16"><use href="#blk"/><path stroke="#f00" stroke-width="4" d="M4 5h3M8 11h3"/></symbol>
<symbol id="rot" viewBox="0 0 16 16"><path fill="#b6bac8" d="M4.500.500h6v15h-6z"/><path stroke="#999eac" stroke-width="1.500" d="M0 11c2 5 6 4 9 2M12 4c4 1 4 7 0 9"/></symbol>
<symbol id="rot2" viewBox="0 0 16 16"><path fill="#e6e9f2" d="M.5 1.500h4l6 14-4-1z"/><path stroke="#999eac" stroke-width="1.500" d="M9 4h6M11 2L9 4l2 2"/></symbol>
<symbol id="rot3" viewBox="0 0 16 16"><path fill="#e6e9f2" d="M15.500 1.500h-4l-6 14 4-1z"/><path stroke="#999eac" stroke-width="1.500" d="M1 4h6M5 2l2 2-2 2"/></symbol>
<symbol id="trap" viewBox="0 0 16 16"><path fill="#b6bac8" d="M3.500 4.500h9l3 6v5H.5v-5zM.5 10.500h15M8 0v6"/></symbol>
<symbol id="trapd" viewBox="0 0 16 16"><path fill="#b6bac8" d="M.5.500h15v5l-3 6h-9l-3-6zM.5 5.500h15M8 9v7"/></symbol>
<symbol id="persp" viewBox="0 0 16 16"><path fill="#e6e9f2" d="M5.500.500h4l6 10v5H.5v-5zM.5 10.500h15"/></symbol>
<symbol id="cubes" viewBox="0 0 16 16"><path fill="#b6bac8" d="M4.500.500h11v10l-4 3M.5 4.500h11v11H.5z"/></symbol>
<symbol id="fit" viewBox="0 0 16 16"><path fill="#b6bac8" d="M4.500 4.500h7v7h-7z"/><path fill="#999eac" stroke="none" d="M0 0h5L0 5zM16 0h-5l5 5zM0 16h5l-5-5zM16 16h-5l5-5zM6 0h4L8 4zM6 16h4l-2-4z"/></symbol>
<symbol id="scube" viewBox="0 0 16 16"><path fill="#b6bac8" d="M4.500 6.500l3-3h6v6l-3 3h-6zM4.500 6.500h6v6M10.500 6.500l3-3M1 15l3-3M13 8h3"/></symbol>
<symbol id="folder" viewBox="0 0 32 28"><path fill="url(#tan)" stroke="#6b634a" stroke-width="1" d="M.5 27.500V3l3-2.500h8L15 4h16.500v23.500z"/></symbol>
<symbol id="folderopen" viewBox="0 0 32 26"><path fill="url(#tan)" stroke="#a08a50" stroke-width="1" d="M2 24V3l2-2h8l2 3h12v20z"/><path fill="url(#gold)" stroke="#8a6a20" stroke-width="1" d="M2 25l7-15h22l-6 15z"/></symbol>
<symbol id="book" viewBox="0 0 32 32"><path fill="#000" stroke="none" d="M3 3h29v29H3z"/><path fill="#fff" stroke="#28a" stroke-width="1" d="M.5.500h28v28H.5z"/><path stroke="#e22" stroke-width="3" stroke-dasharray="4 5" d="M3 4.500h26"/><path stroke="#2e4" stroke-width="2" stroke-dasharray="7 2" d="M2 11h26M2 16.500h26M2 21.500h26M2 26.500h26"/><path stroke="#1a3a8a" stroke-width="1" d="M10 1v28M19 1v28M1 8h28M1 14h28M1 19h28M1 24h28"/></symbol>
<symbol id="graphic" viewBox="0 0 32 32"><path fill="#000" stroke="none" d="M4 4h27v27H4z"/><path fill="#fff" stroke="#f0f" stroke-width="2" d="M1 1h29v29H1z"/><path fill="#2ee" stroke="#e22" stroke-width="2" d="M4 4h22v20H4zM4 14h22"/><path stroke="#000" stroke-width="2" d="M7 11l5-3 3 2 4-4 5 3M6 21c6-5 12 0 18-5"/></symbol>
</svg>

<header class="titlebar">
  <svg class="logo" viewBox="0 0 32 32"><path fill="#dfeef8" stroke="#9cc4dc" stroke-width="1" d="M8 1h23v28H8zM16 1v28M24 1v28M8 8h23M8 15h23M8 22h23"/><circle cx="14" cy="18" r="13.500" fill="url(#ball)" stroke="none"/><path stroke="#5a6a8a" stroke-width="1.500" d="M6 22l5-9 4 9 5-12"/></svg>
  <h1>Ge_Si_wafer_bonding_dark_poly-Ge_2nm_recombination_rate.opju * - D:\资料\111毕设材料\program\Origin_Graph_2024\ - /Folder1/ - OriginPro 2024 - [Graph1 *]</h1>
  <div class="winbtns">
    <button aria-label="最小化"><svg viewBox="0 0 20 20"><path d="M0 10h20"/></svg></button>
    <button aria-label="还原"><svg viewBox="0 0 20 20"><rect x="1" y="4" width="15" height="15" rx="3"/><path d="M5 1h9c3 0 5 2 5 5v9"/></svg></button>
    <button aria-label="关闭"><svg viewBox="0 0 20 20"><path d="M0 0l20 20M20 0L0 20"/></svg></button>
  </div>
</header>

<nav class="menubar">
  <svg class="appico" viewBox="0 0 32 32"><path fill="#000" stroke="none" d="M4 3h27v28H4z"/><path fill="#fff" stroke="#000" stroke-width="2" d="M1 1h27v28H1z"/><path fill="#2ee" stroke="#e22" stroke-width="2" d="M4 4h20v20H4zM4 14h20"/><path stroke="#000" stroke-width="2" d="M7 11l5-3 3 2 4-4 5 3"/><path stroke="#a0a" stroke-width="2" d="M6 21c6-5 12 0 16-5"/></svg>
  <a href="#">文件(<u>F</u>)</a><a href="#">编辑(<u>E</u>)</a><a href="#">查看(<u>V</u>)</a><a href="#">图(<u>G</u>)</a><a href="#">格式(<u>O</u>)</a><a href="#">插入(<u>I</u>)</a><a href="#">数据(<u>D</u>)</a><a href="#">分析(<u>A</u>)</a><a href="#">快捷分析(<u>S</u>)</a><a href="#">工具(<u>T</u>)</a><a href="#">设置(<u>R</u>)</a><a href="#">连接(<u>N</u>)</a><a href="#">窗口(<u>W</u>)</a><a href="#">帮助(<u>H</u>)</a>
  <div class="mdibtns">
    <button aria-label="最小化窗口"><svg viewBox="0 0 16 16"><path stroke-width="4" d="M2 13h12"/></svg></button>
    <button aria-label="还原窗口"><svg viewBox="0 0 16 16"><path stroke-width="2" d="M5 6V1h9v8h-3M1 7h9v8H1zM1 8h9M5 2h9"/></svg></button>
    <button aria-label="关闭窗口"><svg viewBox="0 0 16 16"><path stroke-width="3" d="M2 2l12 12M14 2L2 14"/></svg></button>
  </div>
</nav>

<div class="row">
  <div class="bar">
    <button><svg><use href="#doc"/></svg></button><button><svg><use href="#docfold"/></svg></button><button><svg><use href="#doctable"/></svg></button><button><svg><use href="#docgraph"/></svg></button><button><svg><use href="#docyel"/></svg></button><button><svg><use href="#func"/></svg></button><button class="dd"></button><button><svg><use href="#docnote"/></svg></button><button><svg><use href="#docdata"/></svg></button><button><svg><use href="#docaxis"/></svg></button><button><svg><use href="#doctulip"/></svg></button><i></i>
    <button><svg><use href="#open"/></svg></button><button><svg><use href="#cloud"/></svg></button><button><svg><use href="#save"/></svg></button><button><svg><use href="#savegraph"/></svg></button><i></i>
    <button class="g"><svg><use href="#run"/></svg></button><button><svg><use href="#stop"/></svg></button><i></i>
    <select class="zoom" aria-label="缩放"><option>100%</option></select><i></i>
    <button><svg><use href="#print"/></svg></button><button><svg><use href="#slide"/></svg></button><button><svg><use href="#magenta"/></svg></button><button><svg><use href="#brush"/></svg></button><button><svg><use href="#win"/></svg></button><button><svg><use href="#wins"/></svg></button><i></i>
    <button><svg><use href="#tree"/></svg></button><i></i>
    <button class="on"><svg><use href="#magfold"/></svg></button><button class="on"><svg><use href="#maggraph"/></svg></button><button><svg><use href="#calc"/></svg></button><button><svg><use href="#notes"/></svg></button><button><svg><use href="#cmd"/></svg></button><button><svg><use href="#gear"/></svg></button><i></i>
    <button class="g"><svg><use href="#addcol"/></svg></button><button class="of"></button>
  </div>
  <div class="bar">
    <button><svg><use href="#sumcol"/></svg></button><button><svg><use href="#sumrow"/></svg></button><button class="g"><svg><use href="#sort"/></svg></button><i></i><button class="g"><svg><use href="#n123"/></svg></button><i></i><button class="g"><svg><use href="#bars"/></svg></button><button class="g"><svg><use href="#bars2"/></svg></button><button class="g"><svg><use href="#bars3"/></svg></button><i></i><button class="g"><svg><use href="#filter"/></svg></button><button class="g"><svg><use href="#filterx"/></svg></button><button class="g"><svg><use href="#filterr"/></svg></button><button class="of"></button>
  </div>
  <div class="bar">
    <button><svg><use href="#moon"/></svg></button><i></i><button><svg><use href="#cc"/></svg></button><button><svg><use href="#cwin"/></svg></button><i></i><button class="g"><svg><use href="#theme"/></svg></button><button class="dd g"></button><i></i><button class="g"><svg><use href="#cm"/></svg></button><button class="of"></button>
  </div>
  <div class="bar">
    <button class="g"><svg><use href="#plusm"/></svg></button><i></i><button class="g"><svg><use href="#X"/></svg></button><button class="g on"><svg><use href="#Y"/></svg></button><button class="g"><svg><use href="#Z"/></svg></button><button class="g"><svg><use href="#ibar"/></svg></button><button class="g none">none</button><i></i><button class="g"><svg><use href="#first"/></svg></button><button class="g"><svg><use href="#prev"/></svg></button><button class="g"><svg><use href="#next"/></svg></button><button class="g"><svg><use href="#last"/></svg></button><button class="of"></button>
  </div>
</div>

<div class="row">
  <div class="bar">
    <button class="g"><svg><use href="#fback"/></svg></button><button class="g"><svg><use href="#ffwd"/></svg></button><button class="g"><svg><use href="#fup"/></svg></button><i></i><button class="g"><svg><use href="#fnew"/></svg></button><button class="g"><svg><use href="#fnew2"/></svg></button><i></i><button class="g"><svg><use href="#refresh"/></svg></button><button><svg><use href="#pin"/></svg></button><i></i><button class="g"><svg><use href="#undo"/></svg></button><button class="of"></button>
  </div>
  <div class="bar">
    <button><svg><use href="#impwiz"/></svg></button><button><svg><use href="#imp123"/></svg></button><i></i><button><svg><use href="#impxl"/></svg></button><button class="g"><svg><use href="#reimp"/></svg></button><button class="g"><svg><use href="#reimp2"/></svg></button><i></i><button><svg><use href="#books"/></svg></button><i></i><button><svg><use href="#greenf"/></svg></button><button class="g"><svg><use href="#globe"/></svg></button><button class="g"><svg><use href="#papers"/></svg></button><button class="of"></button>
  </div>
  <div class="bar">
    <button class="g"><svg><use href="#cut"/></svg></button><button class="g"><svg><use href="#copy"/></svg></button><button><svg><use href="#paste"/></svg></button><button class="of"></button>
  </div>
  <div class="bar">
    <span class="fontbox"><span class="tt" aria-hidden="true"><b>T</b><b>T</b></span><select class="gray" aria-label="字体"><option>默认: 宋体</option></select></span>
    <select class="gray num" aria-label="字号"><option>0</option></select>
    <button class="g txt"><b>B</b></button><button class="g txt"><em>I</em></button><button class="g txt"><u>U</u></button><button class="g txt">X<sup>2</sup></button><button class="g txt">X<sub>2</sub></button><button class="g txt">X<sup>2</sup></button><button class="g txt">αβ</button><button class="g txt"><b>A</b><sup>▴</sup></button><button class="g txt small"><b>A</b><sup>▾</sup></button><button class="g"><svg><use href="#align"/></svg></button><button class="dd"></button><button class="g"><svg><use href="#vlines"/></svg></button><button class="dd"></button><button class="g txt color">A</button><button class="dd g"></button><button class="of"></button>
  </div>
  <div class="bar">
    <button class="g"><svg><use href="#bucket"/></svg></button><button class="dd g"></button><button class="g"><svg><use href="#skull"/></svg></button><button class="dd g"></button><button class="g"><svg><use href="#pencil"/></svg></button><button class="dd g"></button><button class="g"><svg><use href="#bulb"/></svg></button>
    <select class="gray num linesel" aria-label="线型"><option>━━ 实</option></select>
    <select class="gray num" aria-label="线宽"><option>0</option></select>
    <button class="swatch" aria-label="填充颜色"></button><button class="dd g"></button>
    <select class="gray num" aria-label="图案大小"><option>0</option></select>
    <button class="g"><svg><use href="#hatch"/></svg></button><button class="dd g"></button><button class="g"><svg><use href="#borders"/></svg></button><button class="dd"></button><button class="g"><svg><use href="#merge"/></svg></button><button class="of"></button>
  </div>
</div>

<main class="work">
  <div class="logs"><button>消息日志</button><button>提示日志 (5)</button></div>
  <div class="tools">
    <div class="vbar">
      <button class="on"><svg><use href="#ptr"/></svg></button><button><svg><use href="#zin"/></svg></button><button class="g"><svg><use href="#zout"/></svg></button><button><svg><use href="#cross"/></svg></button><button><svg><use href="#target"/></svg></button><button class="dd"></button><button><svg><use href="#squeeze"/></svg></button><button><svg><use href="#ell"/></svg></button><button class="dd"></button><button><svg><use href="#ellg"/></svg></button><button class="dd"></button><button><svg><use href="#dots"/></svg></button><button class="txt tool">T</button><button><svg><use href="#layer"/></svg></button><button class="dd"></button><button><svg><use href="#arr"/></svg></button><button class="dd"></button><button><svg><use href="#line"/></svg></button><button class="dd"></button><button><svg><use href="#rect"/></svg></button><button class="dd"></button><button><svg><use href="#hand"/></svg></button><button><svg><use href="#sqrt"/></svg></button><button class="dd"></button><button><svg><use href="#docins"/></svg></button><button class="dd"></button><button><svg><use href="#handax"/></svg></button><button class="g"><svg><use href="#cube"/></svg></button><button class="of"></button>
    </div>
    <div class="vbar">
      <button><svg><use href="#stripes"/></svg></button><button class="g"><svg><use href="#rings"/></svg></button><button class="g"><svg><use href="#box"/></svg></button><button><svg><use href="#legend"/></svg></button><button><svg><use href="#newx"/></svg></button><button class="dd"></button><button><svg><use href="#ruler"/></svg></button><button><svg><use href="#clock"/></svg></button><button><svg><use href="#foldst"/></svg></button><button><svg><use href="#table"/></svg></button><button><svg><use href="#sqrt"/></svg></button><button class="of"></button>
    </div>
    <div class="vbar slim">
      <button><svg><use href="#barM"/></svg></button><button><svg><use href="#barX"/></svg></button><i></i><button class="g"><svg><use href="#updn"/></svg></button><button class="g"><svg><use href="#updn2"/></svg></button><i></i><button class="g"><svg><use href="#lock"/></svg></button><button class="of"></button>
    </div>
  </div>

  <section class="project">
    <header class="phead"><h2>项目管理器 (1)</h2><span class="pbtns"><button aria-label="菜单" class="tri"></button><button aria-label="固定"><svg viewBox="0 0 16 16"><path d="M4 1v8h8V1zM10 1v8M1 9.500h14M8 10v6"/></svg></button><button aria-label="关闭"><svg viewBox="0 0 16 16"><path d="M1 1l14 14M15 1L1 15"/></svg></button></span></header>
    <div class="ptree">
      <ul>
        <li><svg class="fico"><use href="#folder"/></svg><span>Ge_Si_wafer_bonding_dark_poly-Ge_2nm_rec</span></li>
        <li class="sub"><a href="#"><svg class="fico"><use href="#folderopen"/></svg>Folder1</a></li>
      </ul>
      <div class="hscroll"><div></div></div>
    </div>
    <div class="plist">
      <table>
        <thead><tr><th>名称<span class="up"></span></th><th>大小</th><th>注释</th><th></th></tr></thead>
        <tbody>
          <tr><td><svg><use href="#book"/></svg>export1.dat</td><td>127KB</td><td></td><td></td></tr>
          <tr><td><svg><use href="#book"/></svg>export2.dat</td><td>54KB</td><td></td><td></td></tr>
          <tr><td><svg><use href="#book"/></svg>export3.dat</td><td>54KB</td><td></td><td></td></tr>
          <tr><td><svg><use href="#book"/></svg>export4.dat</td><td>54KB</td><td></td><td></td></tr>
          <tr><td><svg><use href="#book"/></svg>export5.dat</td><td>54KB</td><td></td><td></td></tr>
          <tr><td><svg><use href="#book"/></svg>export6.dat</td><td>54KB</td><td></td><td></td></tr>
          <tr><td><svg><use href="#book"/></svg>export7.dat</td><td>54KB</td><td></td><td></td></tr>
          <tr><td><svg><use href="#book"/></svg>export8.dat</td><td>54KB</td><td></td><td></td></tr>
          <tr class="cur"><td><svg><use href="#graphic"/></svg>Graph1</td><td>19KB</td><td></td><td></td></tr>
          <tr class="rest"><td></td><td></td><td></td><td></td></tr>
        </tbody>
      </table>
    </div>
  </section>

  <section class="canvas">
    <svg class="plot" viewBox="662 175 1710 1309">
      <defs>
        <path id="hump" d="M1134 393L1141 414C1165 392 1225 380 1313 380C1380 380 1407 386 1419 414L1424 334 1428 336 1740 367C1800 373 1850 383 1993 384"/>
      </defs>
      <rect x="662" y="175" width="1710" height="1309" fill="#fff"/>
      <rect x="663" y="176" width="38" height="38" fill="#6699cc"/>
      <text x="682" y="206" class="lay">1</text>
      <g stroke="#000" fill="none">
        <path stroke-width="3" d="M970 326v942M968 1267h1168"/>
        <path stroke-width="16" stroke-dasharray="3 35.600" d="M979 337.500V1240"/>
        <path stroke-width="8" stroke-dasharray="3 35.600" d="M975 342.500V1240M975 352V1245"/>
        <path stroke-width="4" d="M1139 1247v20M1425 1247v20M1708 1247v20M1993 1247v20"/>
        <path stroke-width="3" d="M997 1257v10M1282 1257v10M1566 1257v10M1850 1257v10M2134 1257v10"/>
      </g>
      <g class="num end"><text x="949" y="431">1E21</text><text x="949" y="624">1E16</text><text x="949" y="817">1E11</text><text x="949" y="1010">1000000</text><text x="949" y="1204">10</text></g>
      <g class="num mid"><text x="1142" y="1320">1.0</text><text x="1425" y="1320">1.5</text><text x="1708" y="1320">2.0</text><text x="1993" y="1320">2.5</text></g>
      <path d="M1380 1346h343" stroke="#000" stroke-width="4"/>
      <text class="xt" y="1385"><tspan x="1380">Position</tspan><tspan x="1608">(μm)</tspan></text>
      <path d="M725 1328V451M725 398v-40M725 304v-40" stroke="#000" stroke-width="5"/>
      <path d="M713 451v-52M713 357v-53" stroke="#000" stroke-width="3"/>
      <g class="yt" transform="translate(787 1327) rotate(-90)"><text x="0">Recombination</text><text x="558">Rate</text><text x="744">(cm</text><text x="932">s</text><text x="1020">)</text><g class="sup"><text x="877" y="-32">–3</text><text x="971" y="-32">–1</text></g></g>
      <g fill="none" stroke-width="9" stroke-linecap="round" stroke-linejoin="round">
        <g stroke="#505050" stroke-width="8"><path d="M1087 692L1091 644C1098 585 1115 550 1134 519"/><use href="#hump" y="125"/></g>
        <g stroke="#f04040" stroke-width="8"><path d="M1088 622L1090 605C1094 520 1112 485 1134 454"/><use href="#hump" y="60"/></g>
        <path stroke="#0ff" stroke-width="3" d="M1089 560v112"/>
        <path stroke="#f0f" stroke-width="3" d="M1089 540v36"/>
        <path stroke="#ffb366" d="M1084 1200V423"/>
        <g stroke="#0f0"><path d="M1088 545L1093 508C1102 460 1115 425 1134 405"/><use href="#hump" y="10"/></g>
        <use href="#hump" y="2" stroke="#ffb366"/>
        <g stroke="#008000"><path d="M1083 1217V600M1090 512L1093 496C1101 448 1115 412 1134 391"/><use href="#hump" y="-2"/></g>
        <g stroke="#968000"><path d="M1083 1214V465M1084 465v60l6-10 3-17C1101 450 1115 414 1134 393"/><use href="#hump"/></g>
      </g>
      <rect x="1938" y="229" width="281" height="437" fill="none" stroke="#000" stroke-width="1"/>
      <g stroke-width="9" stroke-linecap="round"><path stroke="#505050" d="M1945 260h97"/><path stroke="#f04040" d="M1945 314h97"/><path stroke="#0f0" d="M1945 367h97"/><path stroke="#0ff" d="M1945 421h97"/><path stroke="#f0f" d="M1945 475h97"/><path stroke="#808000" d="M1945 528h97"/><path stroke="#008000" d="M1945 582h97"/><path stroke="#ffb366" d="M1945 636h97"/></g>
      <path stroke="#000" stroke-width="4" d="M2042 239h171M2042 292h171M2042 346h171M2042 400h171M2042 453h171M2042 507h171M2042 561h171M2042 614h171"/>
      <g class="leg"><text x="2066" y="276">0.30eV</text><text x="2066" y="330">0.40eV</text><text x="2066" y="383">0.50eV</text><text x="2066" y="437">0.66eV</text><text x="2066" y="491">0.77eV</text><text x="2066" y="544">0.88eV</text><text x="2066" y="598">0.99eV</text><text x="2066" y="652">1.10eV</text></g>
    </svg>
    <div class="note n6"><span>6</span><p>加上外边框，变成一个封闭图形</p></div>
    <div class="note n2"><span>2</span><p>双击曲线修改宽度为4后，可以使用系统的多种配色，<br>也可以手动“解除组合”后进行单一修改。</p></div>
    <div class="note n3"><span>3</span><p>删除图例的边框</p></div>
    <div class="note n4"><span>4</span><p>两个坐标轴指标朝内</p></div>
    <div class="note n5"><span>5</span><p>字体都改为36号</p></div>
  </section>

  <div class="tools right">
    <div class="vbar">
      <button><svg><use href="#steps"/></svg></button><button><svg><use href="#ax1"/></svg></button><button><svg><use href="#ax2"/></svg></button><button><svg><use href="#ax3"/></svg></button><button><svg><use href="#xy"/></svg></button><button class="on"><svg><use href="#runax"/></svg></button><i></i><button><svg><use href="#lay1"/></svg></button><button><svg><use href="#lay2"/></svg></button><button><svg><use href="#lay3"/></svg></button><button><svg><use href="#wins"/></svg></button><i></i><button><svg><use href="#fr1"/></svg></button><button><svg><use href="#fr2"/></svg></button><button><svg><use href="#fr3"/></svg></button><button><svg><use href="#fr4"/></svg></button><button><svg><use href="#fr5"/></svg></button><button><svg><use href="#fr6"/></svg></button><button class="of"></button>
    </div>
    <div class="vbar">
      <button class="g"><svg><use href="#al1"/></svg></button><button class="g"><svg><use href="#al2"/></svg></button><i></i><button class="g"><svg><use href="#al3"/></svg></button><button class="g"><svg><use href="#al4"/></svg></button><i></i><button class="g"><svg><use href="#al5"/></svg></button><button class="g"><svg><use href="#al6"/></svg></button><i></i><button class="g"><svg><use href="#al7"/></svg></button><button class="g"><svg><use href="#al8"/></svg></button><i></i><button class="g"><svg><use href="#al9"/></svg></button><button class="g"><svg><use href="#al10"/></svg></button><button class="g"><svg><use href="#fb1"/></svg></button><button class="g"><svg><use href="#fb2"/></svg></button><i></i><button class="g"><svg><use href="#vib"/></svg></button><button class="g"><svg><use href="#vib2"/></svg></button><i></i><button class="g"><svg><use href="#grp"/></svg></button><button class="g"><svg><use href="#grp"/></svg></button><button class="of"></button>
    </div>
  </div>

  <aside class="side">
    <header class="phead"><h2>对象管理器</h2><span class="pbtns"><button aria-label="菜单" class="tri"></button><button aria-label="固定"><svg viewBox="0 0 16 16"><path d="M4 1v8h8V1zM10 1v8M1 9.500h14M8 10v6"/></svg></button><button aria-label="关闭"><svg viewBox="0 0 16 16"><path d="M1 1l14 14M15 1L1 15"/></svg></button></span></header>
    <div class="objects">
      <div class="orow sel"><button class="minus" aria-label="折叠"></button><svg class="fico"><use href="#folderopen"/></svg><span>Graph1 - 绘图</span></div>
      <div class="orow lv1"><button class="minus" aria-label="折叠"></button><label><input type="checkbox" checked>Layer1</label></div>
      <ul>
        <li><label><input type="checkbox" checked><s class="k1"></s><b>0.30eV</b></label></li>
        <li><label><input type="checkbox" checked><s class="k2"></s>0.40eV</label></li>
        <li><label><input type="checkbox" checked><s class="k3"></s>0.50eV</label></li>
        <li><label><input type="checkbox" checked><s class="k4"></s>0.66eV</label></li>
        <li><label><input type="checkbox" checked><s class="k5"></s>0.77eV</label></li>
        <li><label><input type="checkbox" checked><s class="k6"></s>0.88eV</label></li>
        <li><label><input type="checkbox" checked><s class="k7"></s>0.99eV</label></li>
        <li><label><input type="checkbox" checked><s class="k8"></s>1.10eV</label></li>
      </ul>
    </div>
    <header class="phead apph"><h2>Apps</h2><span class="pbtns"><button aria-label="菜单" class="tri"></button><button aria-label="固定"><svg viewBox="0 0 16 16"><path d="M4 1v8h8V1zM10 1v8M1 9.500h14M8 10v6"/></svg></button><button aria-label="关闭"><svg viewBox="0 0 16 16"><path d="M1 1l14 14M15 1L1 15"/></svg></button></span></header>
    <div class="apps">
      <div class="tabs">
        <svg class="nav" viewBox="0 0 42 104"><path fill="#000" stroke="none" d="M14 5h16v2H14zM14 18h16l-8-8zM14 42h16l-8-8zM14 60h16l-8 8zM14 86h16l-8 8zM14 96h16v2H14z"/></svg>
        <svg class="edges" viewBox="0 0 42 166"><path fill="#fff" stroke="#888" stroke-width="1" d="M42 0L5 19v42l37 18"/><path stroke="#888" stroke-width="1" d="M24 70L5 80v66l37 19"/></svg>
        <button class="cur">所有</button><button>连接器</button>
      </div>
      <div class="grid">
        <button><svg viewBox="0 0 64 64"><path fill="#fff" stroke="#2d9bd0" stroke-width="2" d="M1 1h54v53H1z"/><path fill="#2d9bd0" stroke="none" d="M0 0h56v6H0z"/><path fill="#ccc" stroke="none" d="M5 11h18v24H5z"/><path stroke="#ccc" stroke-width="3" d="M28 13h20M28 22h22M4 42h16M4 50h16"/><circle cx="44" cy="45" r="19" fill="#3fbf3f" stroke="none"/><path stroke="#fff" stroke-width="7" d="M44 33v24M32 45h24"/></svg>添加App</button>
        <button><svg viewBox="0 0 64 64"><path stroke="#3d4255" stroke-width="5" d="M32 32l31 31"/><path fill="#e8c83c" stroke="#c9a820" stroke-width="1" d="M24 3l5 15 14 3-12 11 1 14-13-8-15 7 5-15L0 18l16-1z"/><path fill="#f6d860" stroke="none" d="M46 2l2 5 5 1-5 2-2 5-2-5-5-2 5-1zM5 42l1 4 4 1-4 1-1 4-2-4-3-1 3-1z"/></svg>Stats<br>Advisor</button>
        <button><svg viewBox="0 0 64 64"><path fill="#2c4a7c" stroke="none" d="M1 1h63v62H1z"/><path fill="#fff" stroke="none" d="M14 14h26L28 52H16l2-10H6l8-4H5l12-5H9l12-5h-8l11-5H12l10-5z"/><path fill="#8fc4f2" stroke="none" d="M40 14h22l-4 8H48l-2 6h12l-2 7H44l-6 17h-8z"/></svg>Speedy Fit</button>
        <button><svg viewBox="0 0 64 64"><path fill="#0a5cc8" stroke="none" d="M0 0h64v62H0z"/><path stroke="#cde4fa" stroke-width="2" d="M5 4v56h56M1 9l4-6 4 6"/><path stroke="#f0208c" stroke-width="4" d="M8 57c30-2 44-14 50-48"/><g fill="#fff" stroke="none"><circle cx="14" cy="56" r="3"/><circle cx="27" cy="53" r="3"/><circle cx="39" cy="48" r="3"/><circle cx="46" cy="37" r="3"/><circle cx="55" cy="26" r="3"/><circle cx="58" cy="9" r="3"/></g></svg>Simple Fit</button>
        <button><svg viewBox="0 0 64 64"><path fill="#fff" stroke="#0e5fa8" stroke-width="2" d="M38 12h22v36H38M40 18h16M40 25h16M40 32h16M40 39h16"/><path fill="#0e5a9c" stroke="none" d="M16 11l26-5v48l-26-6z"/><path fill="#3a8cf0" stroke="none" d="M4 42h14v-6l10 12-10 10v-5H4z"/><path stroke="#fff" stroke-width="4" d="M21 22l4 15 4-13 4 13 4-16"/></svg>Send Graphs<br>to Word</button>
        <button><svg viewBox="0 0 64 64"><path fill="#fff" stroke="#d24726" stroke-width="2" d="M40 8h23v38H40M46 34h14M46 40h14"/><circle cx="53" cy="20" r="7" fill="#d24726" stroke="none"/><path fill="#d24726" stroke="none" d="M22 5l26-5v54l-26-6zM0 48h16v-6l11 10-11 10v-5H0z"/><path stroke="#fff" stroke-width="5" d="M30 40V15h7c8 0 8 14 0 14h-7"/></svg>Send Graphs<br>to PowerP...</button>
        <button><svg viewBox="0 0 64 64"><path fill="#fff" stroke="#1c7a2a" stroke-width="4" d="M36 2h15l11 11v30M2 6h30l8 8v46H2zM44 14v30"/><path stroke="#1c7a2a" stroke-width="2" d="M8 26l8-6 6 4 6-6 8 3M8 40l8-8 6 4 6-6 8 3"/><path fill="#1c7a2a" stroke="none" d="M30 46h34v18H30z"/><text x="34" y="60" class="pub">PUB</text></svg>Graph<br>Publisher</button>
        <button><svg viewBox="0 0 64 64"><path stroke="#e22" stroke-width="5" stroke-dasharray="3 3" d="M5 3v34"/><path stroke="#3a6" stroke-width="5" stroke-dasharray="3 3" d="M14 3v34"/><path stroke="#26d" stroke-width="5" stroke-dasharray="3 3" d="M23 3v26"/><path fill="#e11" stroke="none" d="M32 48h8v14h-8z"/><path fill="#3a6" stroke="none" d="M44 46h8v16h-8z"/><path fill="#1a6ae0" stroke="none" d="M56 36h8v26h-8z"/><path fill="#808000" stroke="none" d="M2 54l26-18c-2-10 6-20 18-18l-6 8 4 8 9-2c-2 8-10 12-20 10L8 62z"/></svg>Graph<br>Maker</button>
        <button><svg viewBox="0 0 64 64"><circle cx="32" cy="32" r="32" fill="#2f83f7" stroke="none"/><path stroke="#000" stroke-width="4" d="M36 14H14c-4 0-6 2-6 6v24c0 4 2 6 6 6h28c4 0 5-2 5-6v-8"/><path fill="#000" stroke="none" d="M27 32l18-18 8 8-18 18-9 2zM47 12l4-3 8 8-4 4z"/></svg>Graph<br>Annotator</button>
        <button><svg viewBox="0 0 64 64"><path fill="#fff" stroke="#bcd8f0" stroke-width="2" d="M1 52V18l5-7h14l4 5h25v10"/><path fill="#0e5fa8" stroke="none" d="M13 23h50L50 54H1z"/><path stroke="#fff" stroke-width="4" d="M27 44l6-14h12M30 37h11"/><circle cx="50" cy="47" r="10" fill="#0e5fa8" stroke="#fff" stroke-width="2"/><path stroke="#fff" stroke-width="3" d="M50 41v12M44 47h12"/></svg>Fitting<br>Functi...</button>
      </div>
    </div>
  </aside>
</main>

<div class="row bottom">
  <div class="bar">
    <button><svg><use href="#sline"/></svg></button><button class="dd"></button><button><svg><use href="#sdots"/></svg></button><button class="dd"></button><button><svg><use href="#slidot"/></svg></button><button class="dd"></button><button><svg><use href="#redbar"/></svg></button><button class="dd"></button><button><svg><use href="#multi"/></svg></button><button class="dd"></button><button><svg><use href="#rbox"/></svg></button><button class="dd"></button><button><svg><use href="#area"/></svg></button><button class="dd"></button><button><svg><use href="#polar"/></svg></button><button class="dd"></button><button><svg><use href="#candle"/></svg></button><button class="dd"></button><button class="g"><svg><use href="#wall"/></svg></button><button class="of"></button>
  </div>
  <div class="bar">
    <button class="g"><svg><use href="#c3d"/></svg></button><button class="dd"></button><i></i><button class="g"><svg><use href="#s3d"/></svg></button><button class="dd"></button><button class="g"><svg><use href="#d3d"/></svg></button><button class="dd"></button><button class="g"><svg><use href="#mesh"/></svg></button><button class="dd"></button><button class="g"><svg><use href="#contour"/></svg></button><button class="dd"></button><button class="g"><svg><use href="#img"/></svg></button><button class="of"></button>
  </div>
  <div class="bar">
    <button class="g"><svg><use href="#mask1"/></svg></button><button class="g"><svg><use href="#maskx"/></svg></button><i></i><button class="g"><svg><use href="#mask"/></svg></button><button class="g"><svg><use href="#blk"/></svg></button><button><svg><use href="#blkr"/></svg></button><i></i><button><svg><use href="#blkr"/></svg></button><button class="of"></button>
  </div>
  <div class="bar">
    <button class="g"><svg><use href="#rot"/></svg></button><button class="g"><svg><use href="#rot"/></svg></button><button class="g"><svg><use href="#rot2"/></svg></button><button class="g"><svg><use href="#rot3"/></svg></button><button class="g"><svg><use href="#trap"/></svg></button><button class="g"><svg><use href="#trapd"/></svg></button><button class="g"><svg><use href="#persp"/></svg></button><button class="g"><svg><use href="#cubes"/></svg></button><button class="g"><svg><use href="#fit"/></svg></button><button class="g"><svg><use href="#scube"/></svg></button><button class="g"><svg><use href="#scube"/></svg></button>
    <select class="gray num" aria-label="旋转角度"><option>10</option></select><button class="of"></button>
  </div>
</div>

<footer class="status">
  <span class="help">&lt; &lt; <span>【开始】菜单 (F1)</span></span>
  <span class="cell dash">--</span><span class="cell">AU : 开</span><span class="cell">Light Grids</span><span class="cell">1:[Book2]export1!Col("Recombination</span>
</footer>

<svg class="orb" viewBox="0 0 60 60"><circle cx="24" cy="36" r="23" fill="url(#ball)" stroke="none" opacity=".7"/><circle cx="27" cy="24" r="20" fill="#cfe0fb" fill-opacity=".8" stroke="#2a5cf0" stroke-width="5"/><path stroke="#3a7ad8" stroke-width="2" d="M15 32l9-9 5 5 9-11"/><path stroke="#6d8fe8" stroke-width="7" d="M42 40l15 13"/></svg>
<div class="frame cyan"></div>
<div class="frame red"></div>
<span class="badge one">1</span>
<svg class="pointer" viewBox="0 0 64 118"><path fill="#fd3a3a" stroke="none" d="M58 0l3 2-38 86 7 10L0 117V92l11 3z"/></svg>

<div class="ime">
  <svg class="sogou" viewBox="0 0 64 64"><path fill="#f4511e" stroke="none" d="M2 12L52 2c4 0 6 2 7 5l4 45c0 3-1 4-4 5L14 63c-4 0-6-2-7-5L0 16c0-2 0-3 2-4z"/><path stroke="#fff" stroke-width="7" d="M50 14c-12-5-32-3-32 6 0 10 30 4 30 15 0 10-24 12-34 6"/></svg>
  <b>英</b>
  <svg viewBox="0 0 32 32"><circle cx="7" cy="10" r="4" fill="#1a6ae0" stroke="none"/><path fill="#1a6ae0" stroke="none" d="M18 16h8c1 6-2 10-7 12 3-4 3-6-1-7z"/></svg>
  <svg viewBox="0 0 32 32"><rect x="11" y="2" width="10" height="18" rx="5" fill="#1a6ae0" stroke="none"/><path stroke="#1a6ae0" stroke-width="3" d="M5 14c0 14 22 14 22 0M16 24v6"/></svg>
  <svg viewBox="0 0 32 32"><path fill="#fff" stroke="#1a6ae0" stroke-width="3" d="M2 5h28v22H2z"/><path stroke="#1a6ae0" stroke-width="3" stroke-dasharray="4 3" d="M6 12h20M6 17h20"/><path stroke="#1a6ae0" stroke-width="3" d="M10 22h12"/></svg>
  <svg viewBox="0 0 32 32"><path fill="#a06af0" stroke="none" d="M9 5c3 4 11 4 14 0l9 6-3 6-5-2v15H8V15l-5 2-3-6z"/><path fill="#f45a4a" stroke="none" d="M22 2h8v8h-8z"/></svg>
  <svg viewBox="0 0 32 32"><g fill="#1a6ae0" stroke="none"><rect x="2" y="2" width="12" height="12" rx="3"/><rect x="18" y="2" width="12" height="12" rx="3"/><rect x="2" y="18" width="12" height="12" rx="3"/><rect x="18" y="18" width="12" height="12" rx="3"/></g></svg>
  <svg viewBox="0 0 32 32"><ellipse cx="14" cy="16" rx="13" ry="9" fill="#f08a2a" stroke="none"/><path stroke="#222" stroke-width="3" d="M6 14l5 2M17 12l6 1M9 22h8"/></svg>
</div>
<div class="mark">CSDN @电子科技小筑</div>
</body>
</html>
```
FILE: styles.css
```css
:root {
  --ui: "Open Sans", "Noto Sans CJK SC", sans-serif;
  --obj: "Liberation Sans", "Noto Sans CJK SC", sans-serif;
  --bar: linear-gradient(#f4f7fd, #e4e7f3 40%, #acaec7);
  --vbar: linear-gradient(90deg, #f6f8fe, #e4e7f3 40%, #acaec7);
  --ink: #646b7b;
}
* { box-sizing: border-box; }
body {
  margin: 0;
  min-height: 100vh;
  display: flex;
  flex-direction: column;
  position: relative;
  overflow: hidden;
  background: #ebecfb;
  font: 24px/32px var(--ui);
  color: #000;
}
button, select, input { font: inherit; color: inherit; margin: 0; padding: 0; }
button { border: 0; background: none; display: flex; align-items: center; justify-content: center; }
svg { fill: none; stroke: currentColor; display: block; flex: none; }
h1, h2, p, ul { margin: 0; padding: 0; font-weight: 400; font-size: 24px; list-style: none; }
a { color: inherit; text-decoration: none; }
.sprite { position: absolute; width: 0; height: 0; }

.titlebar { height: 45px; display: flex; align-items: center; background: #eff3fa; padding-right: 38px; }
.titlebar h1 { flex: 1; white-space: nowrap; font-size: 23px; }
.logo { width: 32px; height: 32px; margin: 0 8px 0 0; }
.winbtns { display: flex; gap: 72px; }
.winbtns svg { width: 20px; height: 20px; stroke-width: 2; }

.menubar { height: 42px; display: flex; align-items: center; gap: 16px; background: linear-gradient(90deg, #edeefb, #f2f6fe); padding: 0 12px; white-space: nowrap; font-size: 23px; }
.appico { width: 30px; height: 30px; }
.menubar u { text-underline-offset: 3px; }
.mdibtns { margin-left: auto; display: flex; gap: 22px; }
.mdibtns svg { width: 16px; height: 16px; }

.row { display: flex; height: 43px; background: #f3f6ff; --dd: 19px; }
.bar { display: flex; align-items: center; height: 43px; background: var(--bar); border-bottom: 2px solid #9a9cb4; padding: 2px 0 0 11px; position: relative; }
.bar::before { content: ""; position: absolute; left: 4px; top: 12px; height: 20px; border-left: 3px dotted #a4a7b8; }
.bar button { width: 39px; height: 39px; flex: none; }
.bar svg, .vbar svg { width: 32px; height: 32px; }
.bar i { width: 2px; height: 30px; margin: 0 3px; background: #c4c7d6; border-right: 1px solid #fff; }
.g { color: var(--ink); }
.bar .on, .vbar .on { background: #d2e6f5; border: 2px solid #0078d7; }
.bar .dd, .vbar .dd { width: var(--dd); }
.dd::after, .tri::after { content: ""; border: 5px solid transparent; border-top: 7px solid #000; border-bottom: 0; }
.dd.g::after { border-top-color: #8a8a8a; }
.bar .of { width: 22px; height: 43px; margin-top: -2px; background: linear-gradient(#b0b2ca, #f0f0fc); flex-direction: column; justify-content: flex-end; gap: 4px; padding-bottom: 4px; }
.of::before { content: ""; width: 10px; height: 3px; background: #000; }
.of::after { content: ""; border: 5px solid transparent; border-top: 7px solid #000; border-bottom: 0; }
.none { font: 16px/24px "Liberation Sans", sans-serif; }

select { appearance: none; border: 0; border-radius: 0; height: 35px; opacity: 1; background: #fff url("data:image/svg+xml,%3Csvg xmlns='http://www.w3.org/2000/svg' width='10' height='8'%3E%3Cpath d='M0 0h10L5 8z'/%3E%3C/svg%3E") no-repeat right 10px center; }
.zoom { width: 118px; margin: 0 2px; padding-left: 2px; }
.gray { border: 2px solid #a8a8a8; background-color: #f0f0f0; color: #6e6e6e; background-image: url("data:image/svg+xml,%3Csvg xmlns='http://www.w3.org/2000/svg' width='10' height='8'%3E%3Cpath fill='%23808080' d='M0 0h10L5 8z'/%3E%3C/svg%3E"); }
.gray.num { width: 119px; margin-right: 5px; padding-left: 2px; }
.gray.linesel { background-color: #f4f8fd; margin-left: 5px; }
.fontbox { display: flex; align-items: center; width: 254px; height: 35px; border: 2px solid #a8a8a8; background: #f4f8fd; margin-right: 5px; }
.fontbox select { border: 0; height: 31px; flex: 1; background-color: transparent; font-size: 23px; }
.tt { font: 700 28px/30px "Liberation Serif", serif; display: flex; padding: 0 4px; color: #000; }
.tt b:first-child { font-size: 18px; color: #555; line-height: 20px; }
.txt { font: 700 32px/36px "Liberation Serif", serif; }
.txt b { font-weight: 700; }
.txt sup, .txt sub { font-size: 18px; line-height: 18px; color: #9aa0b0; align-self: flex-start; }
.txt sub { align-self: flex-end; }
.txt.small { font-size: 24px; }
.bar .txt.color { font-weight: 400; border-bottom: 7px solid #6a6a6a; width: 33px; height: 35px; margin: 0 3px; }
.vbar .tool { font-size: 38px; }
.bar .swatch { width: 36px; height: 31px; border: 2px solid #b8bac8; background: #e6e8f2; margin: 0 6px 0 14px; }

.work { flex: 1; display: flex; min-height: 0; }
.logs { width: 36px; display: flex; flex-direction: column; gap: 15px; padding-top: 3px; }
.logs button { writing-mode: vertical-rl; text-orientation: sideways; width: 35px; height: 131px; background: #f2f2f4; border: 1px solid #c8c8d0; border-width: 0 1px 1px 0; color: #777; justify-content: flex-start; padding-top: 8px; white-space: nowrap; font-size: 23px; }
.logs button + button { height: 178px; }

.tools { margin-left: 2px; width: 60px; display: flex; flex-direction: column; }
.vbar { display: grid; grid-template-columns: 39px 18px; align-content: start; background: var(--vbar); border: 1px solid #b4b6ca; border-width: 0 1px; padding: 9px 0 0; position: relative; width: 60px; }
.vbar::before { content: ""; position: absolute; left: 14px; top: 3px; width: 30px; border-top: 3px dotted #a4a7b8; }
.vbar button { grid-column: 1; width: 39px; height: 39px; }
.vbar .dd { grid-column: 2; width: 18px; }
.vbar i { grid-column: 1 / -1; height: 2px; margin: 3px 0 3px 12px; background: #c4c7d6; }
.vbar .of { grid-column: 1 / -1; width: auto; height: 20px; margin: 2px 0 0; background: linear-gradient(90deg, #f0f0fc, #b8bad0); justify-content: flex-end; gap: 4px; padding-right: 4px; border-bottom: 2px solid #f8f8ff; }
.vbar .of::before { width: 3px; height: 10px; }
.vbar .of::after { border: 5px solid transparent; border-left: 7px solid #000; border-right: 0; }
.slim { width: 42px; grid-template-columns: 39px; }
.right { margin-left: 2px; width: 48px; }
.right .vbar { width: 44px; grid-template-columns: 39px; }
.right .vbar::before, .slim::before { width: 16px; }

.project { width: 558px; margin-left: 1px; display: flex; flex-direction: column; background: #f0f0f4; }
.phead { height: 41px; flex: none; display: flex; align-items: center; background: linear-gradient(#bfcddb, #d6e3ef); padding: 0 6px 0 5px; }
.phead h2 { flex: 1; }
.pbtns { display: flex; gap: 10px; align-items: center; }
.pbtns svg { width: 16px; height: 16px; stroke-width: 2; }
.tri::after { border-width: 9px 9px 0; }
.ptree { height: 242px; flex: none; background: #fff; border: 2px solid #9a9a9a; display: flex; flex-direction: column; justify-content: space-between; overflow: hidden; }
.ptree li { display: flex; align-items: center; gap: 5px; white-space: nowrap; padding: 2px 0 0 3px; height: 34px; }
.ptree .sub { padding: 0 0 0 36px; position: relative; }
.ptree .sub::before { content: ""; position: absolute; left: 19px; top: 0; width: 17px; height: 17px; border: 1px dotted #888; border-width: 0 0 1px 1px; }
.ptree .sub a { display: flex; align-items: center; gap: 6px; background: #d9d9d9; border-radius: 3px; padding: 1px 6px 1px 2px; }
.fico { width: 32px; height: 28px; }
.hscroll { height: 32px; background: #f0f0f0; padding: 7px 0 0 34px; }
.hscroll div { width: 362px; height: 19px; background: #868686; }
.plist { flex: 1; margin-top: 4px; background: #fff; border: 2px solid #9a9a9a; display: flex; }
table { border-collapse: collapse; width: 100%; table-layout: fixed; height: 100%; }
th { font-weight: 400; text-align: left; height: 39px; padding: 0 4px; border-right: 1px solid #e2e2e2; }
th:nth-child(1) { width: 188px; }
th:nth-child(2) { width: 96px; }
th:nth-child(3) { width: 245px; }
th:last-child { border: 0; }
.up { float: right; margin: 14px 10px 0 0; border: 4px solid transparent; border-bottom: 5px solid #888; border-top: 0; }
td { height: 35px; padding: 0 0 0 5px; border-right: 1px solid #d8e8f8; white-space: nowrap; line-height: 33px; }
td:first-child { padding-left: 4px; }
td:last-child { border: 0; }
td svg { width: 32px; height: 32px; float: left; margin: 0 2px 0 0; }
.cur td { font-weight: 700; }
.rest td { height: auto; border-right-color: #b8d4f0; }

.canvas { flex: 1; min-width: 0; margin-left: 3px; background: #c0c0c0; border-left: 2px solid #7a7a88; border-top: 2px solid #7a7a88; position: relative; overflow: hidden; }
.plot { width: 100%; height: auto; }
.plot text { stroke: none; fill: #000; font-family: "Liberation Serif", serif; }
.plot .lay { font: 700 34px "Liberation Sans", sans-serif; fill: #fff; text-anchor: middle; }
.num text { font-size: 38px; }
.end text { text-anchor: end; }
.mid text { text-anchor: middle; }
.plot .xt { font-size: 54px; }
.yt text { font-size: 84px; }
.yt .sup text { font-size: 53px; }
.leg text { font-size: 50px; }
.note { position: absolute; display: flex; align-items: flex-start; gap: 18px; color: #fff; }
.note p { background: rgba(0, 0, 0, .6); font-size: 32px; line-height: 43px; padding: 12px; min-height: 67px; white-space: nowrap; border-radius: 3px; position: relative; }
.note p::before { content: ""; position: absolute; left: -9px; top: 24px; border: 9px solid transparent; border-left: 0; border-right-color: rgba(0, 0, 0, .6); }
.note span, .badge { width: 40px; height: 40px; border-radius: 50%; background: #fd3a3a; color: #fff; font-size: 28px; line-height: 38px; text-align: center; margin-top: 13px; }
.n6 { left: 609px; top: 64px; }
.n2 { left: 469px; top: 375px; }
.n3 { left: 1372px; top: 485px; }
.n4 { left: 620px; top: 1008px; }
.n5 { left: 131px; top: 1133px; }
.n6 p { width: 484px; }
.n2 p { width: 790px; font-family: "Noto Sans CJK SC", sans-serif; }
.n3 p { width: 260px; }
.n4 p { width: 323px; }
.n5 p { width: 266px; }

.side { width: 458px; display: flex; flex-direction: column; background: #f0f4fa; }
.objects { height: 467px; flex: none; background: #fff; border: 2px solid #666; font: 23px/40px var(--obj); padding: 0 1px; }
.orow { display: flex; align-items: center; height: 40px; }
.sel { background: #0078d7; color: #fff; outline: 1px dotted #fff; outline-offset: -2px; }
.orow .fico { margin: 0 3px; }
.minus { width: 25px; height: 25px; border: 1px solid #999; background: #f4f4f4; margin-left: 1px; }
.minus::after { content: ""; width: 13px; height: 3px; background: #3a5aa8; }
.lv1 { padding-left: 29px; gap: 3px; }
.objects label { display: flex; align-items: center; }
.objects input { appearance: none; width: 30px; height: 30px; border-radius: 5px; background: #005fb8; display: grid; place-items: center; }
.objects input::after { content: ""; width: 7px; height: 13px; border: solid #fff; border-width: 0 2px 2px 0; transform: rotate(40deg); margin-top: -4px; }
.lv1 input { margin-right: 4px; }
.objects ul { margin-left: 42px; border-left: 1px dotted #b0b0b0; height: 302px; }
.objects li { height: 40px; padding-left: 44px; background: linear-gradient(90deg, #c0c0c0, #c0c0c0) 0 20px / 17px 1px no-repeat; font-size: 23px; line-height: 40px; }
.objects s { width: 79px; height: 4px; margin-right: 2px; }
.k1 { background: #505050; }
.k2 { background: #f04040; }
.k3 { background: #0f0; }
.k4 { background: #0ff; }
.k5 { background: #f0f; }
.k6 { background: #808000; }
.k7 { background: #008000; }
.k8 { background: #ffb366; }
.apph { margin-top: 4px; }
.apps { flex: 1; display: flex; border-top: 2px solid #999; }
.tabs { width: 42px; background: #f0f0f0; position: relative; display: flex; flex-direction: column; align-items: center; }
.nav { width: 42px; height: 104px; }
.edges { position: absolute; left: 0; top: 104px; width: 42px; height: 166px; }
.tabs button { position: relative; writing-mode: vertical-rl; text-orientation: sideways; height: 50px; justify-content: center; font-size: 23px; }
.tabs .cur { font-weight: 700; margin-top: 12px; }
.tabs button:last-child { height: 74px; margin-top: 10px; }
.grid { flex: 1; background: #fff; border-left: 1px solid #999; display: grid; grid-template-columns: 150px 150px; grid-auto-rows: 150px; padding: 3px 0 0 1px; }
.grid button { flex-direction: column; justify-content: flex-start; line-height: 31px; gap: 0; }
.grid svg { width: 64px; height: 64px; margin-bottom: 2px; }
.pub { font: 700 13px "Liberation Sans", sans-serif; fill: #fff; stroke: none; }

.bottom { height: 45px; padding: 1px 0 0 97px; background: #eff2fb; --dd: 18px; }
.status { height: 38px; display: flex; align-items: center; background: #f0f0f0; border-top: 2px solid #dcdcdc; padding: 7px 392px 0 60px; white-space: nowrap; font-size: 23px; }
.help { flex: 1; }
.cell { border-left: 2px solid #d4d4d4; padding: 0 6px; font-size: 22px; }
.dash { padding-right: 26px; }

.orb { position: absolute; left: 0; bottom: 0; width: 60px; height: 60px; }
.frame { position: absolute; border: 6px solid #17dfdf; }
.cyan { left: 50px; top: 770px; width: 447px; height: 83px; }
.red { left: 85px; bottom: 19px; width: 107px; height: 86px; border: 7px solid #fd3a3a; }
.badge.one { position: absolute; left: 180px; bottom: 222px; margin: 0; }
.pointer { position: absolute; left: 140px; bottom: 105px; width: 64px; height: 118px; }
.ime { position: absolute; right: 0; bottom: 2px; height: 54px; width: 404px; padding-right: 8px; display: flex; align-items: center; justify-content: space-between; background: linear-gradient(90deg, transparent 40px, #f7f9fe 40px); color: #1a6ae0; font-size: 28px; }
.ime svg { width: 32px; height: 32px; }
.ime .sogou { width: 64px; height: 64px; }
.mark { position: absolute; right: 4px; bottom: 17px; font: 55px/60px "Lato", "Noto Sans CJK SC", sans-serif; color: rgba(200, 200, 205, .75); text-shadow: 1px 2px 2px rgba(110, 110, 110, .7); white-space: nowrap; }
```
